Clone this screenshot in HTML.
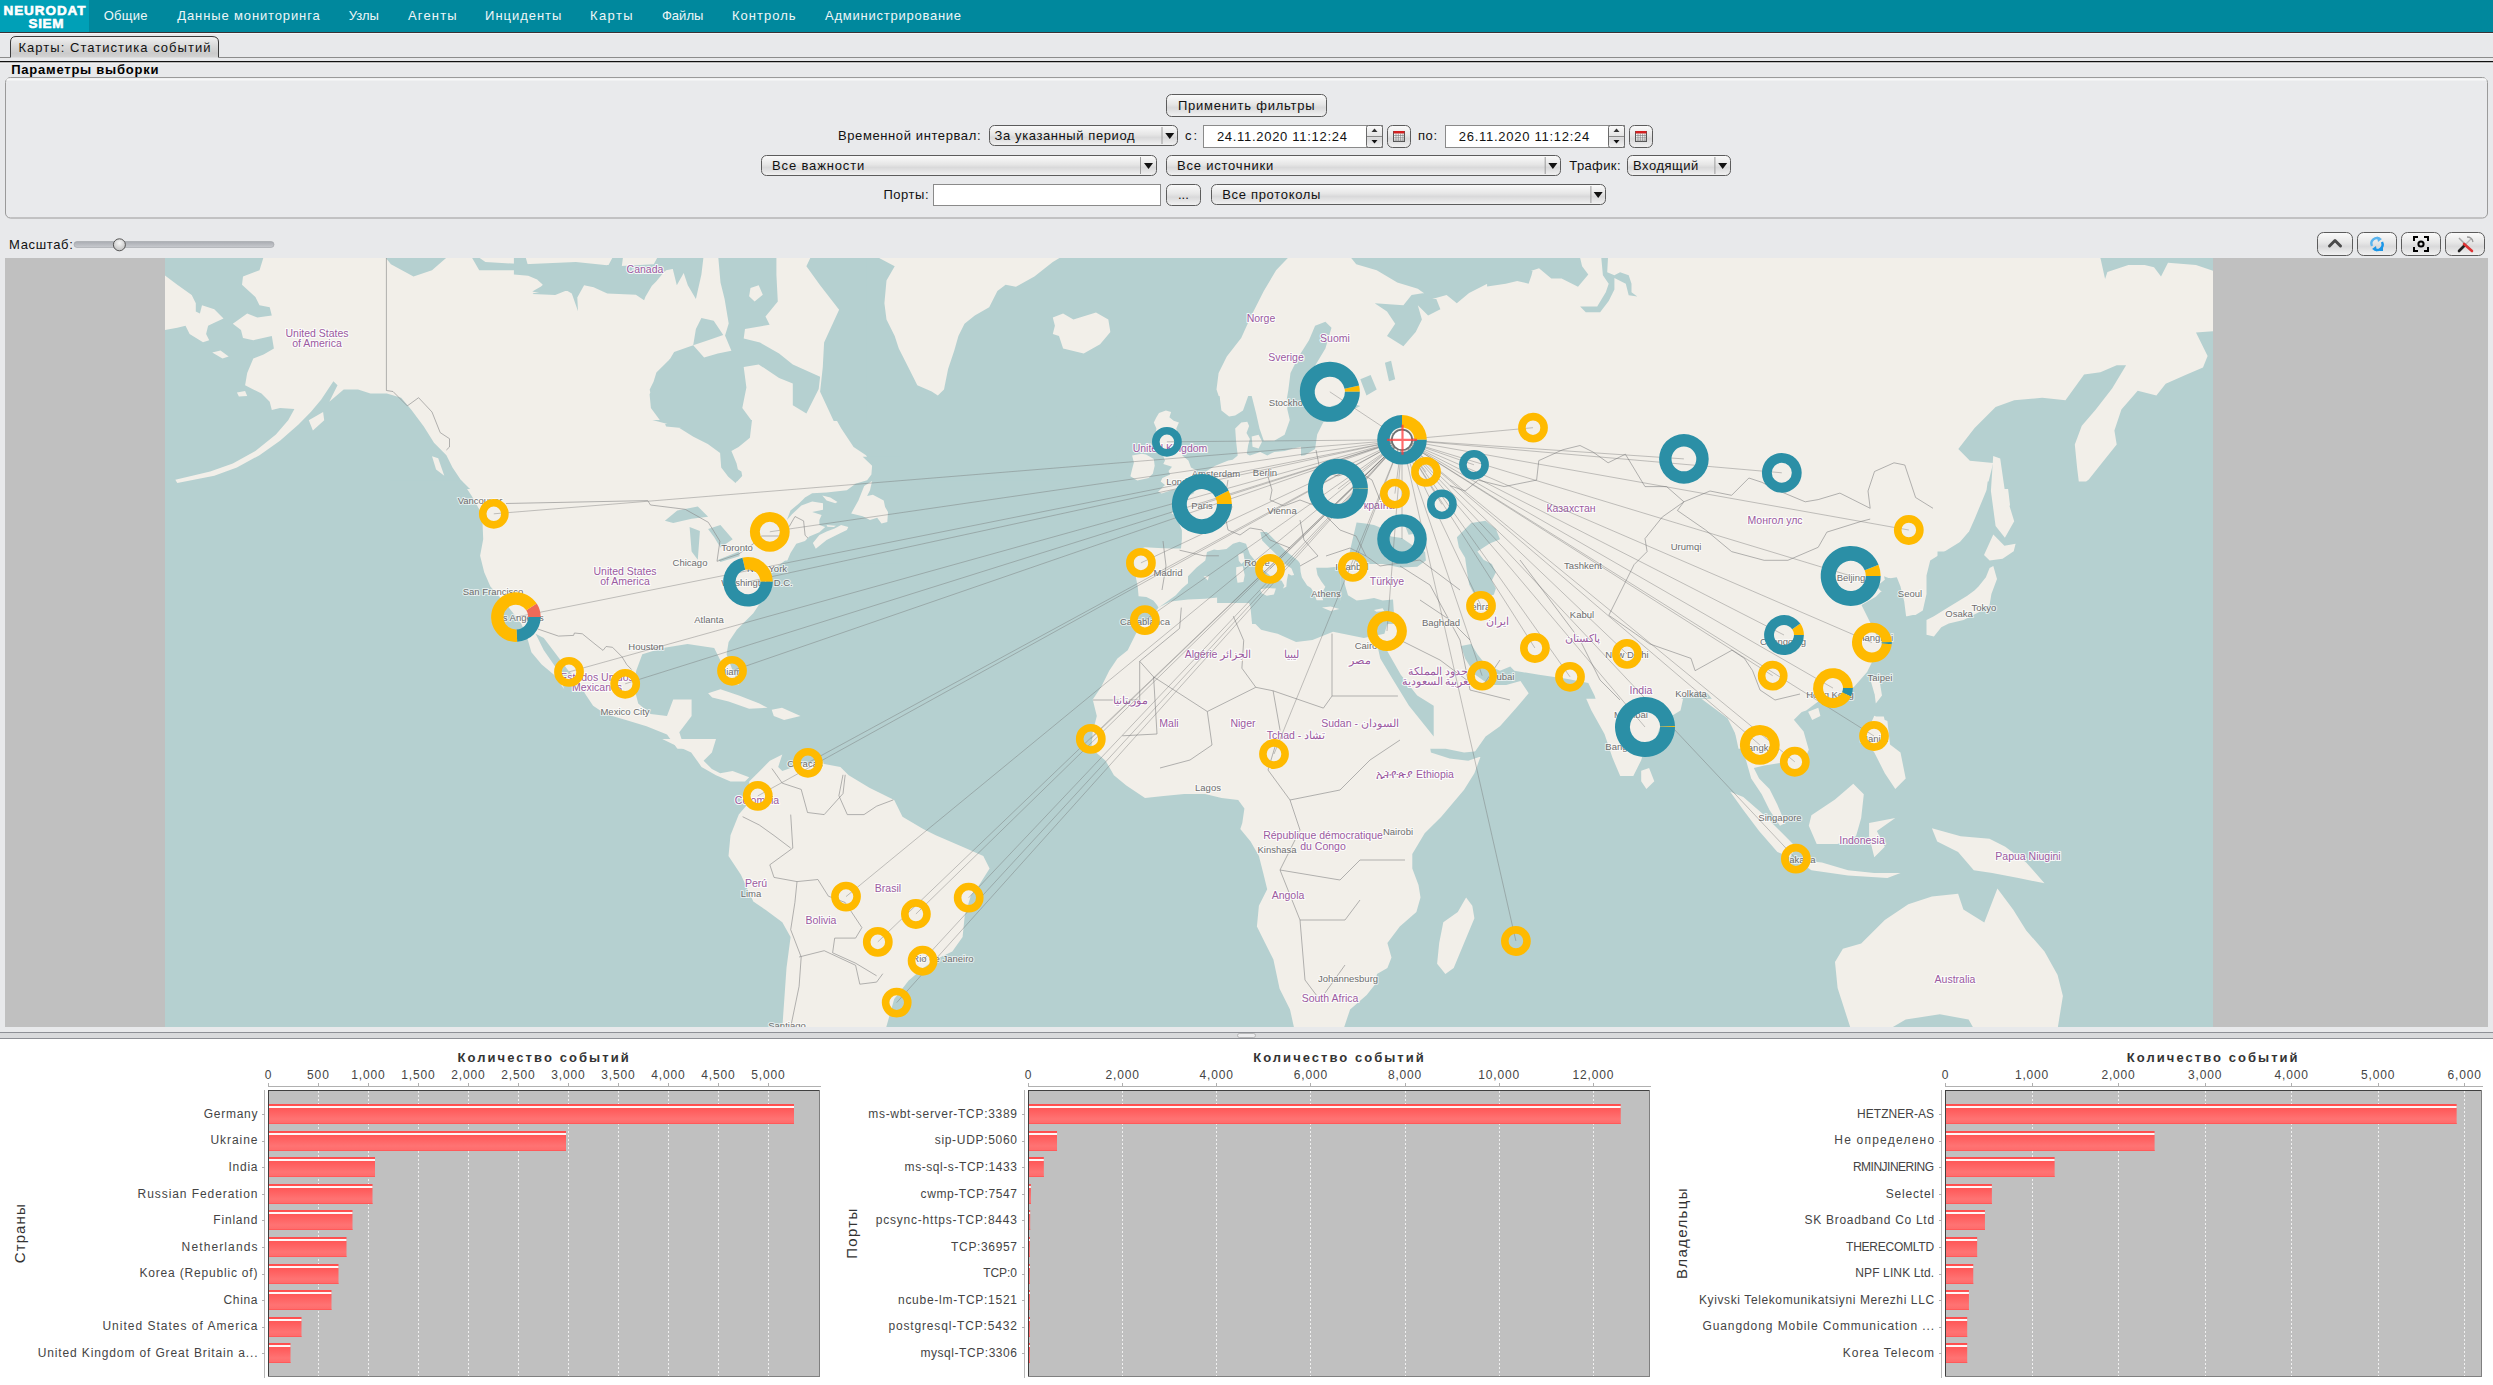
<!DOCTYPE html>
<html><head><meta charset="utf-8"><title>NeuroDAT SIEM</title>
<style>html,body{margin:0;padding:0;background:#e8e9eb;overflow:hidden}svg{display:block}text{font-family:"Liberation Sans",sans-serif}</style>
</head><body>
<svg xmlns="http://www.w3.org/2000/svg" width="2493" height="1385" viewBox="0 0 2493 1385" font-family="Liberation Sans, sans-serif"><defs>
<linearGradient id="gBtn" x1="0" y1="0" x2="0" y2="1">
 <stop offset="0" stop-color="#fbfbfb"/><stop offset="0.45" stop-color="#e6e6e6"/>
 <stop offset="0.6" stop-color="#d9d9da"/><stop offset="1" stop-color="#f2f2f2"/>
</linearGradient>
<linearGradient id="gTab" x1="0" y1="0" x2="0" y2="1">
 <stop offset="0" stop-color="#f2f2f2"/><stop offset="0.45" stop-color="#dadada"/><stop offset="0.8" stop-color="#cbcbcb"/><stop offset="1" stop-color="#d3d3d3"/>
</linearGradient>
<linearGradient id="gBar" x1="0" y1="0" x2="0" y2="1">
 <stop offset="0" stop-color="#ff4d4d"/><stop offset="0.75" stop-color="#ff7373"/><stop offset="1" stop-color="#ff6a6a"/>
</linearGradient>
<linearGradient id="gTrack" x1="0" y1="0" x2="0" y2="1">
 <stop offset="0" stop-color="#a9acb2"/><stop offset="1" stop-color="#c9cbcf"/>
</linearGradient>
<radialGradient id="gThumb" cx="0.5" cy="0.35" r="0.6">
 <stop offset="0" stop-color="#f6f6f6"/><stop offset="1" stop-color="#c4c4c4"/>
</radialGradient>
</defs><rect x="0" y="0" width="2493" height="1385" fill="#e8e9eb" />
<rect x="0" y="0" width="2493" height="32" fill="#00889d" />
<rect x="0" y="0" width="89" height="32" fill="#00a0b7" />
<rect x="0" y="32" width="2493" height="1" fill="#3b3335" />
<rect x="0" y="33" width="2493" height="1" fill="#f5f5f7" />
<text x="3.5" y="14.6" font-size="13.5" font-weight="bold" fill="#ffffff" textLength="82.0" lengthAdjust="spacing" text-anchor="start" stroke="#ffffff" stroke-width="0.6">NEURODAT</text>
<text x="28.5" y="28.4" font-size="13.5" font-weight="bold" fill="#ffffff" textLength="35.0" lengthAdjust="spacing" text-anchor="start" stroke="#ffffff" stroke-width="0.6">SIEM</text>
<text x="103.7" y="20.0" font-size="13" fill="#eef6f8" textLength="43.9" lengthAdjust="spacing" text-anchor="start" >Общие</text>
<text x="177.3" y="20.0" font-size="13" fill="#eef6f8" textLength="142.4" lengthAdjust="spacing" text-anchor="start" >Данные мониторинга</text>
<text x="348.7" y="20.0" font-size="13" fill="#eef6f8" textLength="30.1" lengthAdjust="spacing" text-anchor="start" >Узлы</text>
<text x="407.9" y="20.0" font-size="13" fill="#eef6f8" textLength="48.8" lengthAdjust="spacing" text-anchor="start" >Агенты</text>
<text x="485.1" y="20.0" font-size="13" fill="#eef6f8" textLength="76.3" lengthAdjust="spacing" text-anchor="start" >Инциденты</text>
<text x="590.0" y="20.0" font-size="13" fill="#eef6f8" textLength="42.6" lengthAdjust="spacing" text-anchor="start" >Карты</text>
<text x="661.9" y="20.0" font-size="13" fill="#eef6f8" textLength="41.5" lengthAdjust="spacing" text-anchor="start" >Файлы</text>
<text x="732.0" y="20.0" font-size="13" fill="#eef6f8" textLength="63.6" lengthAdjust="spacing" text-anchor="start" >Контроль</text>
<text x="825.1" y="20.0" font-size="13" fill="#eef6f8" textLength="136.0" lengthAdjust="spacing" text-anchor="start" >Администрирование</text>
<path d="M10.5,57.5 V42 Q10.5,36.5 16,36.5 H212 Q218.5,36.5 218.5,42 V57.5" fill="url(#gTab)" stroke="#3a3a3a" stroke-width="1"/>
<rect x="218" y="57" width="2275" height="1" fill="#8c8c8c" />
<rect x="0" y="57" width="10" height="1" fill="#8c8c8c" />
<rect x="0" y="61" width="2493" height="1.5" fill="#111111" />
<rect x="0" y="62.5" width="2493" height="1" fill="#f6f6f6" />
<text x="18.5" y="52.0" font-size="13" fill="#111" textLength="192.0" lengthAdjust="spacing" text-anchor="start" >Карты: Статистика событий</text>
<text x="11.2" y="73.8" font-size="13" font-weight="bold" fill="#000" textLength="147.3" lengthAdjust="spacing" text-anchor="start" >Параметры выборки</text>
<rect x="5.5" y="77.5" width="2482" height="140.5" rx="5" fill="#e9eaec" stroke="#9a9a9a" stroke-width="1"/>
<rect x="6.5" y="78.5" width="2480" height="2" fill="#f7f7f8"/>
<rect x="1166.5" y="94.5" width="160" height="22" rx="5" fill="url(#gBtn)" stroke="#5c5c5c" stroke-width="1"/>
<text x="1178.0" y="109.5" font-size="13" fill="#111" textLength="136.5" lengthAdjust="spacing" text-anchor="start" >Применить фильтры</text>
<text x="838.0" y="140.0" font-size="13" fill="#111" textLength="142.5" lengthAdjust="spacing" text-anchor="start" >Временной интервал:</text>
<rect x="989.5" y="125.5" width="188" height="20" rx="5" fill="url(#gBtn)" stroke="#5c5c5c" stroke-width="1"/>
<line x1="1162.0" y1="127" x2="1162.0" y2="144" stroke="#9c9c9c" stroke-width="1" />
<path d="M1165.25,133.0 L1174.25,133.0 L1169.75,139.0 Z" fill="#111"/>
<text x="994.6" y="140.0" font-size="13" fill="#111" textLength="140.0" lengthAdjust="spacing" text-anchor="start" >За указанный период</text>
<text x="1185.0" y="140.0" font-size="13" fill="#111" textLength="12.0" lengthAdjust="spacing" text-anchor="start" >с:</text>
<rect x="1203.5" y="125.5" width="179" height="22" fill="#ffffff" stroke="#8a8a8a" stroke-width="1"/>
<rect x="1366.5" y="125.5" width="16" height="22" rx="2" fill="url(#gBtn)" stroke="#6a6a6a"/>
<line x1="1367" y1="136.5" x2="1382" y2="136.5" stroke="#8a8a8a" stroke-width="1" />
<path d="M1371.5,132 L1377.5,132 L1374.5,128.5 Z" fill="#333"/>
<path d="M1371.5,140 L1377.5,140 L1374.5,143.5 Z" fill="#111"/>
<text x="1216.9" y="141.0" font-size="13" fill="#111" textLength="130.0" lengthAdjust="spacing" text-anchor="start" >24.11.2020 11:12:24</text>
<rect x="1387.5" y="125.5" width="23" height="22" rx="5" fill="url(#gBtn)" stroke="#5c5c5c" stroke-width="1"/>
<rect x="1393.5" y="131.5" width="11" height="10" fill="#f4f4f4" stroke="#555" stroke-width="1"/>
<rect x="1393.5" y="131" width="11" height="2.5" fill="#d42020"/>
<line x1="1393.5" y1="135.5" x2="1404.5" y2="135.5" stroke="#777" stroke-width="0.6" />
<line x1="1393.5" y1="137.8" x2="1404.5" y2="137.8" stroke="#777" stroke-width="0.6" />
<line x1="1393.5" y1="140.1" x2="1404.5" y2="140.1" stroke="#777" stroke-width="0.6" />
<line x1="1396.0" y1="133.5" x2="1396.0" y2="141.5" stroke="#777" stroke-width="0.6" />
<line x1="1398.3" y1="133.5" x2="1398.3" y2="141.5" stroke="#777" stroke-width="0.6" />
<line x1="1400.6" y1="133.5" x2="1400.6" y2="141.5" stroke="#777" stroke-width="0.6" />
<line x1="1402.9" y1="133.5" x2="1402.9" y2="141.5" stroke="#777" stroke-width="0.6" />
<text x="1417.9" y="140.0" font-size="13" fill="#111" textLength="19.1" lengthAdjust="spacing" text-anchor="start" >по:</text>
<rect x="1445.5" y="125.5" width="179" height="22" fill="#ffffff" stroke="#8a8a8a" stroke-width="1"/>
<rect x="1608.5" y="125.5" width="16" height="22" rx="2" fill="url(#gBtn)" stroke="#6a6a6a"/>
<line x1="1609" y1="136.5" x2="1624" y2="136.5" stroke="#8a8a8a" stroke-width="1" />
<path d="M1613.5,132 L1619.5,132 L1616.5,128.5 Z" fill="#333"/>
<path d="M1613.5,140 L1619.5,140 L1616.5,143.5 Z" fill="#111"/>
<text x="1458.8" y="141.0" font-size="13" fill="#111" textLength="130.4" lengthAdjust="spacing" text-anchor="start" >26.11.2020 11:12:24</text>
<rect x="1629.5" y="125.5" width="23" height="22" rx="5" fill="url(#gBtn)" stroke="#5c5c5c" stroke-width="1"/>
<rect x="1635.5" y="131.5" width="11" height="10" fill="#f4f4f4" stroke="#555" stroke-width="1"/>
<rect x="1635.5" y="131" width="11" height="2.5" fill="#d42020"/>
<line x1="1635.5" y1="135.5" x2="1646.5" y2="135.5" stroke="#777" stroke-width="0.6" />
<line x1="1635.5" y1="137.8" x2="1646.5" y2="137.8" stroke="#777" stroke-width="0.6" />
<line x1="1635.5" y1="140.1" x2="1646.5" y2="140.1" stroke="#777" stroke-width="0.6" />
<line x1="1638.0" y1="133.5" x2="1638.0" y2="141.5" stroke="#777" stroke-width="0.6" />
<line x1="1640.3" y1="133.5" x2="1640.3" y2="141.5" stroke="#777" stroke-width="0.6" />
<line x1="1642.6" y1="133.5" x2="1642.6" y2="141.5" stroke="#777" stroke-width="0.6" />
<line x1="1644.9" y1="133.5" x2="1644.9" y2="141.5" stroke="#777" stroke-width="0.6" />
<rect x="761.5" y="155.5" width="395" height="20" rx="5" fill="url(#gBtn)" stroke="#5c5c5c" stroke-width="1"/>
<line x1="1140.5" y1="157" x2="1140.5" y2="174" stroke="#9c9c9c" stroke-width="1" />
<path d="M1144.0,163.0 L1153.0,163.0 L1148.5,169.0 Z" fill="#111"/>
<text x="772.0" y="170.2" font-size="13" fill="#111" textLength="92.3" lengthAdjust="spacing" text-anchor="start" >Все важности</text>
<rect x="1166.5" y="155.5" width="394" height="20" rx="5" fill="url(#gBtn)" stroke="#5c5c5c" stroke-width="1"/>
<line x1="1545.2" y1="157" x2="1545.2" y2="174" stroke="#9c9c9c" stroke-width="1" />
<path d="M1548.35,163.0 L1557.35,163.0 L1552.85,169.0 Z" fill="#111"/>
<text x="1177.0" y="170.2" font-size="13" fill="#111" textLength="96.2" lengthAdjust="spacing" text-anchor="start" >Все источники</text>
<text x="1569.3" y="170.2" font-size="13" fill="#111" textLength="51.2" lengthAdjust="spacing" text-anchor="start" >Трафик:</text>
<rect x="1627.5" y="155.5" width="103" height="20" rx="5" fill="url(#gBtn)" stroke="#5c5c5c" stroke-width="1"/>
<line x1="1714.9" y1="157" x2="1714.9" y2="174" stroke="#9c9c9c" stroke-width="1" />
<path d="M1718.2,163.0 L1727.2,163.0 L1722.7,169.0 Z" fill="#111"/>
<text x="1633.0" y="170.2" font-size="13" fill="#111" textLength="65.3" lengthAdjust="spacing" text-anchor="start" >Входящий</text>
<text x="883.4" y="199.1" font-size="13" fill="#111" textLength="45.1" lengthAdjust="spacing" text-anchor="start" >Порты:</text>
<rect x="933.5" y="184.5" width="227" height="21" fill="#ffffff" stroke="#8a8a8a" stroke-width="1"/>
<rect x="1166.5" y="184.5" width="34" height="21" rx="5" fill="url(#gBtn)" stroke="#5c5c5c" stroke-width="1"/>
<text x="1178.0" y="199.0" font-size="13" fill="#111" text-anchor="start" >...</text>
<rect x="1211.5" y="184.5" width="394" height="20" rx="5" fill="url(#gBtn)" stroke="#5c5c5c" stroke-width="1"/>
<line x1="1590.9" y1="186" x2="1590.9" y2="203" stroke="#9c9c9c" stroke-width="1" />
<path d="M1593.7,192.0 L1602.7,192.0 L1598.2,198.0 Z" fill="#111"/>
<text x="1222.2" y="198.6" font-size="13" fill="#111" textLength="98.2" lengthAdjust="spacing" text-anchor="start" >Все протоколы</text>
<text x="9.0" y="248.7" font-size="13" fill="#111" textLength="63.8" lengthAdjust="spacing" text-anchor="start" >Масштаб:</text>
<rect x="74" y="241.5" width="200" height="6" rx="3" fill="url(#gTrack)" stroke="#a0a3a8" stroke-width="0.6"/>
<circle cx="119.4" cy="244.8" r="6" fill="url(#gThumb)" stroke="#555" stroke-width="1"/>
<rect x="2317.5" y="232.5" width="35" height="23" rx="6" fill="url(#gBtn)" stroke="#5c5c5c" stroke-width="1"/>
<rect x="2357.5" y="232.5" width="39" height="23" rx="6" fill="url(#gBtn)" stroke="#5c5c5c" stroke-width="1"/>
<rect x="2401.5" y="232.5" width="39" height="23" rx="6" fill="url(#gBtn)" stroke="#5c5c5c" stroke-width="1"/>
<rect x="2445.5" y="232.5" width="39" height="23" rx="6" fill="url(#gBtn)" stroke="#5c5c5c" stroke-width="1"/>
<path d="M2329.5,246 L2335,240.5 L2340.5,246" fill="none" stroke="#4a4a4a" stroke-width="3" stroke-linecap="round" stroke-linejoin="round"/>
<g transform="translate(2377,244)"><path d="M-5,2 A5.5,5.5 0 0 1 3,-5" fill="none" stroke="#5ab4ee" stroke-width="2.4"/><path d="M5,-2 A5.5,5.5 0 0 1 -3,5" fill="none" stroke="#1a96e8" stroke-width="2.4"/><path d="M0,-7.5 L5,-5 L1,-2 Z" fill="#5ab4ee"/><path d="M0,7.5 L-5,5 L-1,2 Z M2,7 L6,7 L6,3 Z" fill="#1a96e8"/></g>
<g transform="translate(2421,244)" fill="none" stroke="#000" stroke-width="2"><path d="M-7,-3 V-7 H-3 M3,-7 H7 V-3 M7,3 V7 H3 M-3,7 H-7 V3"/><circle cx="0" cy="0" r="2.6"/></g>
<g transform="translate(2465,244)"><line x1="-6" y1="-6" x2="6" y2="6" stroke="#aaa" stroke-width="1.5"/><line x1="-6" y1="7" x2="0" y2="1" stroke="#222" stroke-width="2.6" stroke-linecap="round"/><line x1="0" y1="1" x2="6" y2="-5" stroke="#bbb" stroke-width="1.2"/><line x1="-1" y1="0" x2="7" y2="7" stroke="#d33" stroke-width="2.6" stroke-linecap="round"/><path d="M2,-7 Q7,-7 8,-2" fill="none" stroke="#999" stroke-width="1.3"/></g>
<rect x="5" y="258" width="2483" height="769" fill="#c0c0c0" />
<svg x="165" y="258" width="2048" height="769" viewBox="0 0 2048 769" overflow="hidden">
<rect x="0" y="0" width="2048" height="769" fill="#b5d0d0" />
<path fill="#f2efe9" d="M0.0,17.5L12.3,26.7L26.7,37.0L30.8,45.2L30.8,53.4L34.9,55.5L37.0,47.2L49.3,51.3L58.5,60.6L47.2,65.7L43.1,67.8L41.1,76.0L44.2,82.2L38.0,84.2L24.6,76.0L20.5,67.8L12.3,69.8L0.0,71.9ZM513.5,-1.0L513.5,258.8L322.4,258.8L316.3,240.3L304.0,230.0L295.7,221.8L287.5,209.5L281.4,197.2L269.0,184.8L258.8,168.4L246.5,152.0L236.2,139.7L221.8,135.6L205.4,135.6L193.1,131.4L178.7,131.4L164.3,143.8L172.5,127.3L168.4,123.2L156.1,141.7L145.8,154.0L133.5,166.4L115.0,182.8L94.5,197.2L71.9,209.5L49.3,217.7L12.3,224.9L10.3,221.8L45.2,213.6L67.8,205.4L90.4,193.1L110.9,176.6L123.2,162.3L129.4,151.0L115.0,149.9L106.8,152.0L104.7,143.8L96.5,135.6L88.3,131.4L80.1,127.3L82.2,115.0L88.3,100.6L98.6,96.5L108.9,90.4L106.8,78.0L88.3,82.2L78.0,80.1L76.0,71.9L67.8,65.7L82.2,55.5L92.4,59.6L106.8,57.5L104.7,49.3L94.5,47.2L90.4,39.0L77.0,26.7L78.0,18.5L94.5,12.3L98.6,-1.0ZM47.2,94.5L55.5,92.4L63.7,98.6L57.5,100.6ZM71.9,134.5L80.1,133.1L82.2,138.0L73.9,138.6ZM143.8,162.3L158.1,154.0L159.2,162.3L147.9,172.5ZM267.0,198.2L273.2,200.2L279.3,217.7L271.1,211.5ZM354.3,-0.7L695.0,-0.7L695.0,163.0L354.3,163.0ZM511.0,143.8L635.2,143.8L655.8,133.5L668.1,156.1L676.3,170.5L688.6,189.0L701.0,197.2L707.1,207.4L705.1,217.7L692.7,228.0L676.3,236.2L655.8,238.2L639.3,244.4L627.0,258.0L511.0,258.0ZM688.6,232.1L696.8,223.9L707.1,230.0L713.3,242.3L721.5,258.0L690.7,258.0ZM896.1,-1.0L887.8,4.1L869.4,18.5L850.9,28.8L840.6,26.7L832.4,32.9L824.2,49.3L809.8,57.5L799.5,65.7L793.4,78.0L789.3,92.4L783.1,110.9L779.0,131.4L772.8,137.6L766.7,133.5L752.3,127.3L748.2,119.1L740.0,102.7L733.8,90.4L729.7,78.0L721.5,61.6L719.4,45.2L721.5,22.6L729.7,8.2L712.2,-1.0ZM887.8,59.6L898.1,55.5L908.4,61.6L931.0,54.4L943.3,61.6L945.4,73.9L935.1,86.3L918.7,95.5L898.1,90.4L894.0,78.0L887.8,76.0L889.9,67.8ZM967.9,199.2L982.3,195.1L992.6,197.2L994.6,207.4L992.6,217.7L976.2,222.8L965.9,217.7L970.0,207.4ZM954.0,-1.0L1468.5,-1.0L1468.5,258.0L954.0,258.0ZM1465.8,-1.2L2049.6,-1.2L2049.6,293.6L1465.8,293.6ZM234.0,231.0L748.5,231.0L748.5,490.8L234.0,490.8ZM870.2,231.0L1260.5,231.0L1260.5,490.8L870.2,490.8ZM1258.0,231.0L1772.5,231.0L1772.5,490.8L1258.0,490.8ZM907.4,481.0L1263.8,481.0L1265.9,494.4L1284.6,500.6L1303.2,502.7L1315.6,498.6L1309.4,515.2L1299.1,531.7L1276.3,558.7L1259.7,575.2L1247.3,596.0L1247.3,610.5L1253.5,627.0L1255.5,639.5L1251.4,654.0L1234.8,668.5L1222.4,685.1L1226.5,699.6L1222.4,709.9L1212.0,716.1L1210.0,726.5L1201.7,736.9L1185.1,751.4L1178.9,770.0L1129.1,770.0L1125.0,751.4L1114.6,730.7L1108.4,701.6L1100.1,685.1L1091.9,668.5L1093.9,647.8L1102.2,631.2L1098.1,614.6L1093.9,598.0L1085.6,583.5L1075.3,571.1L1077.3,564.9L1079.4,550.4L1073.2,542.1L1056.6,540.0L1040.0,535.9L1019.3,535.9L998.6,537.9L980.0,540.0L961.3,527.6L948.9,517.2L940.6,502.7L926.1,490.3ZM1268.0,481.0L1330.1,481.0L1319.8,492.4L1299.1,494.4L1278.3,490.3ZM1301.1,639.5L1307.3,647.8L1309.4,660.2L1299.1,685.1L1288.7,709.9L1280.4,716.1L1272.1,705.8L1274.2,685.1L1278.3,664.3L1292.8,654.0Z"/>
<path fill="#b5d0d0" d="M291.6,-9.2L267.0,12.3L248.5,18.5L225.9,6.2L213.6,-9.2ZM320.4,4.1L359.4,6.2L410.8,4.1L451.8,8.2L488.8,6.2L497.0,-9.2L521.7,-9.2L521.7,8.2L501.1,12.3L488.8,24.6L478.5,42.1L472.4,26.7L462.1,35.9L443.6,30.8L431.3,20.5L416.9,12.3L410.8,28.8L390.2,37.0L367.6,35.9L377.9,26.7L367.6,17.5L349.1,12.3L314.2,12.3L301.9,-9.2ZM521.7,170.5L501.1,168.4L497.0,158.1L486.8,143.8L484.7,131.4L492.9,115.0L505.2,100.6L521.7,92.4ZM348.9,-6.1L359.1,-6.1L363.2,8.2L376.8,13.6L379.5,20.5L395.9,19.1L413.6,12.3L419.1,8.2L431.4,16.4L443.7,6.8L450.5,-6.1L458.7,-6.1L455.9,15.0L466.8,23.2L477.7,23.2L488.7,20.5L492.8,13.6L498.2,4.1L502.3,-6.1L506.4,-6.1L503.7,8.2L491.4,23.2L483.2,31.4L479.1,42.3L470.9,36.8L442.3,35.5L428.6,29.3L419.1,27.3L412.3,39.6L413.0,53.2L406.8,35.5L400.0,31.4L382.3,36.8L367.3,33.4L378.2,27.3L372.7,21.8L363.2,17.7L348.9,16.4ZM499.6,-6.1L539.1,-6.1L536.4,16.4L530.9,40.9L522.8,27.3L518.7,15.0L511.8,27.3L507.8,10.9ZM495.5,163.0L485.9,150.0L484.6,136.4L491.4,114.6L505.0,100.9L509.1,94.1L528.2,87.3L530.9,70.9L536.4,60.0L548.7,62.7L559.6,79.1L563.7,65.5L559.6,40.9L555.5,24.5L552.8,-6.1L611.4,-6.1L611.4,16.4L612.8,43.6L600.5,58.6L604.6,66.8L580.0,70.9L578.7,80.5L595.0,84.6L614.1,95.5L627.8,106.4L655.1,118.7L653.7,130.9L641.4,155.5L627.8,147.3L627.8,125.5L614.1,120.0L593.7,106.4L578.7,109.1L581.4,129.6L577.3,150.0L586.9,163.0ZM648.2,-6.1L701.4,-6.1L701.4,163.0L668.7,163.0L655.1,133.7L657.8,109.1L659.1,84.6L674.1,51.8L655.1,27.3L641.4,8.2ZM587.0,162.0L584.9,179.7L573.6,189.0L566.4,193.1L571.6,205.4L574.6,219.8L570.5,224.9L563.3,218.7L556.2,209.5L555.1,195.1L542.8,185.9L528.4,178.7L512.0,168.4L487.4,162.0ZM627.0,266.2L639.3,244.4L655.8,238.2L676.3,236.2L686.6,230.0L690.7,238.2L686.6,266.2ZM945.8,-9.2L1131.6,-9.2L1111.1,12.3L1098.8,32.9L1086.4,57.5L1076.2,80.1L1061.8,98.6L1053.6,115.0L1051.5,131.4L1057.7,149.9L1068.0,158.1L1080.3,152.0L1086.4,143.8L1090.6,152.0L1088.5,164.3L1080.3,170.5L1072.1,172.5L1070.0,184.8L1072.1,197.2L1065.9,203.3L1051.5,207.4L1041.3,213.6L1037.2,225.9L1035.1,236.2L1022.8,242.3L1006.3,246.5L996.1,266.2L945.8,266.2ZM1082.3,189.0L1088.5,180.7L1098.8,180.7L1104.9,172.5L1111.1,164.3L1119.3,156.1L1123.4,131.4L1125.5,115.0L1133.7,98.6L1144.0,82.2L1150.1,67.8L1160.4,63.7L1166.5,69.8L1160.4,90.4L1148.1,110.9L1144.0,127.3L1146.0,143.8L1160.4,149.9L1180.9,143.8L1195.3,147.9L1178.9,156.1L1158.3,164.3L1152.2,176.6L1150.1,191.0L1139.8,197.2L1111.1,201.3L1078.2,197.2ZM1238.4,47.2L1246.6,37.0L1259.0,34.9L1271.3,41.1L1275.4,51.3L1263.1,57.5L1252.8,47.2L1256.9,61.6L1250.7,73.9L1238.4,88.3L1222.0,78.0L1230.2,65.7L1222.0,53.4L1209.7,45.2ZM1178.9,-9.2L1413.0,-9.2L1417.1,8.2L1423.3,16.4L1413.0,28.8L1396.6,20.5L1386.3,20.5L1374.0,10.3L1355.5,16.4L1324.7,24.6L1304.1,34.9L1291.8,45.2L1281.6,37.0L1267.2,41.1L1252.8,30.8L1232.3,24.6L1211.7,12.3L1191.2,6.2ZM1195.3,121.2L1205.6,117.1L1211.7,131.4L1201.5,137.6ZM1219.9,104.7L1226.1,102.7L1230.2,121.2L1224.0,123.2ZM1933.1,-10.5L2058.9,-10.5L2058.9,16.3L2031.0,7.0L2003.0,4.7L1996.0,18.6L1989.0,9.3L1979.7,7.0L1963.4,7.0L1942.4,14.0L1940.1,21.0ZM1793.3,191.1L1809.6,170.1L1830.6,149.1L1849.2,142.2L1877.2,139.8L1900.5,142.2L1919.1,116.5L1935.4,114.2L1951.7,107.2L1961.1,107.2L1947.1,130.5L1930.8,151.5L1916.8,167.8L1909.8,186.4L1912.1,209.7L1914.4,228.4L1923.8,221.4L1933.1,209.7L1951.7,186.4L1949.4,172.5L1956.4,151.5L1972.7,132.8L1991.4,137.5L2000.7,125.8L2021.6,116.5L2038.0,109.5L2042.6,97.9L2031.0,74.6L2058.9,72.2L2058.9,303.0L1790.9,303.0L1809.6,261.0L1821.2,233.0L1828.2,205.1L1804.9,202.7ZM225.8,222.8L296.6,222.8L306.9,238.2L317.2,256.6L318.2,281.3L315.1,297.7L319.2,314.2L325.4,328.5L341.8,347.0L356.2,365.5L362.3,379.9L366.4,394.3L376.7,406.6L389.0,416.8L399.3,431.2L393.1,412.7L378.8,392.2L370.6,375.8L378.8,379.9L391.1,396.3L403.4,412.7L413.7,423.0L419.8,435.3L428.1,447.7L440.4,455.9L460.9,462.0L481.5,468.2L502.0,476.4L518.4,499.0L225.8,499.0ZM756.7,499.0L522.5,499.0L514.3,474.3L526.6,457.9L526.6,441.5L508.2,441.5L502.0,457.9L485.6,455.9L473.2,445.6L469.1,429.2L471.2,412.7L477.3,396.3L497.9,390.1L522.5,386.0L549.2,390.1L557.4,406.6L565.7,425.1L573.9,427.1L567.7,412.7L561.6,396.3L563.6,384.0L571.8,371.7L588.3,355.2L596.5,342.9L606.7,330.6L604.7,314.2L621.1,301.8L625.2,293.6L635.5,285.4L651.9,289.5L676.6,262.8L686.8,256.6L705.3,244.3L707.4,222.8L756.7,222.8ZM637.5,222.8L707.4,222.8L686.8,244.3L676.6,256.6L656.0,262.8L635.5,256.6L631.4,244.3ZM737.8,222.8L1003.7,222.8L997.6,244.3L999.6,254.6L1014.0,262.8L1016.0,279.2L1009.9,287.5L993.5,289.5L977.0,291.6L970.9,299.8L972.9,314.2L972.9,328.5L975.0,338.8L983.2,347.0L991.4,351.1L989.3,355.2L977.0,365.5L970.9,375.8L962.7,392.2L952.4,400.4L944.2,412.7L936.0,429.2L927.7,441.5L931.8,457.9L927.7,474.3L925.7,499.0L737.8,499.0ZM991.4,349.1L1005.8,338.8L1022.2,328.5L1034.5,303.9L1046.9,291.6L1067.4,285.4L1083.8,285.4L1096.1,291.6L1108.5,301.8L1122.8,314.2L1129.0,322.4L1127.0,330.6L1133.1,322.4L1137.2,314.2L1143.4,310.0L1133.1,297.7L1116.7,285.4L1102.3,275.1L1100.3,273.1L1112.6,281.3L1129.0,293.6L1141.3,305.9L1141.3,314.2L1145.4,328.5L1151.6,342.9L1157.8,340.9L1166.0,324.4L1161.9,314.2L1174.2,308.0L1182.4,314.2L1186.5,328.5L1188.6,338.8L1209.1,342.9L1227.6,342.9L1225.5,355.2L1219.4,375.8L1198.8,379.9L1168.0,373.7L1147.5,381.9L1131.1,384.0L1112.6,375.8L1096.1,371.7L1083.8,359.3L1083.8,342.9L1071.5,345.0L1044.8,345.0L1014.0,349.1L993.5,355.2ZM1184.5,293.6L1190.6,273.1L1209.1,264.9L1229.6,273.1L1244.0,283.3L1268.7,289.5L1268.7,310.0L1239.9,305.9L1219.4,301.8L1198.8,297.7ZM1211.2,381.9L1219.4,388.1L1235.8,416.8L1252.2,437.4L1268.7,447.7L1268.7,478.5L1244.0,447.7L1227.6,421.0L1215.3,400.4ZM1291.9,279.2L1306.2,264.9L1320.6,262.8L1330.9,271.0L1335.0,281.3L1324.7,285.4L1312.4,293.6L1318.6,301.8L1326.8,305.9L1330.9,314.2L1326.8,322.4L1330.9,330.6L1328.8,336.7L1318.6,338.8L1308.3,334.7L1304.2,326.5L1302.1,314.2L1300.1,299.8L1293.9,289.5ZM1306.2,499.0L1320.6,478.5L1335.0,468.2L1351.4,449.7L1363.7,435.3L1355.5,423.0L1341.2,427.1L1324.7,427.1L1310.3,416.8L1300.1,400.4L1296.0,388.1L1306.2,386.0L1312.4,396.3L1320.6,406.6L1335.0,412.7L1345.3,408.6L1349.4,412.7L1374.0,416.8L1402.8,421.0L1423.3,425.1L1429.5,437.4L1433.6,449.7L1439.7,457.9L1443.8,474.3L1452.1,499.0ZM1484.9,499.0L1495.2,468.2L1505.5,449.7L1517.8,439.4L1526.0,435.3L1542.4,435.3L1550.6,445.6L1560.9,455.9L1569.1,470.2L1575.3,499.0ZM1626.6,499.0L1628.7,462.0L1636.9,453.8L1645.1,441.5L1659.5,443.5L1669.8,437.4L1690.3,429.2L1706.7,412.7L1714.9,396.3L1717.0,386.0L1710.8,375.8L1702.6,359.3L1696.5,347.0L1710.8,338.8L1721.1,328.5L1719.1,318.3L1729.3,322.4L1731.4,334.7L1735.5,347.0L1737.5,359.3L1756.0,355.2L1761.6,353.2L1761.6,326.5L1765.3,312.1L1780.7,301.8L1780.7,499.0ZM1656.6,451.0L1689.1,428.7L1702.1,413.9L1709.5,399.0L1720.7,386.0L1713.2,361.9L1702.1,352.6L1707.7,343.3L1718.8,335.9L1711.4,328.5L1720.7,321.1L1731.8,319.2L1735.5,328.5L1739.2,343.3L1741.1,358.2L1748.5,358.2L1757.8,352.6L1761.5,335.9L1761.5,317.4L1765.2,302.5L1780.0,293.2L1794.9,284.0L1807.9,269.1L1819.0,250.6L1822.7,223.6L2049.1,223.6L2049.1,497.4L1656.6,497.4ZM1322.1,-12.9L1403.6,-12.9L1406.5,8.6L1412.2,17.2L1417.9,20.0L1412.2,28.6L1400.8,20.0L1392.2,14.3L1369.3,5.7L1366.5,17.2L1363.6,25.7L1352.2,22.9L1340.7,25.7L1322.1,28.6ZM1435.1,-12.9L1443.7,-12.9L1442.2,14.3L1449.4,17.2L1455.1,14.3L1463.7,17.2L1466.5,25.7L1466.5,34.3L1472.3,38.6L1463.7,37.2L1460.8,25.7L1449.4,20.0L1449.4,31.5L1443.7,42.9L1435.1,54.3L1420.8,54.3L1415.1,48.6L1432.2,48.6L1440.8,34.3L1443.7,25.7L1437.9,17.2Z"/>
<path fill="#f2efe9" d="M528.2,87.3L544.6,81.8L559.6,76.4L566.4,92.7L552.8,95.5L539.1,99.6ZM585.5,30.0L593.7,27.3L597.8,36.8L589.6,43.6L584.1,38.2ZM992.0,162.3L1004.3,152.0L1012.5,162.3L1006.3,174.6L1016.6,189.0L1022.8,205.4L1028.9,221.8L1033.0,231.1L1016.6,236.2L996.1,234.1L998.1,223.9L1004.3,215.7L996.1,203.3L998.1,193.1L985.8,180.7L981.7,164.3ZM965.3,217.7L971.4,203.3L981.7,197.2L989.9,200.2L996.1,205.4L995.0,217.7L985.8,225.9L967.3,223.9ZM1828.2,198.1L1835.2,200.4L1839.9,233.0L1849.2,263.3L1839.9,279.7L1830.6,268.0L1825.9,233.0ZM686.8,236.1L699.2,232.0L711.5,240.2L723.8,254.6L719.7,264.9L705.3,262.8L690.9,252.5ZM543.1,435.3L555.4,431.2L573.9,437.4L594.4,445.6L602.6,449.7L584.1,450.7L563.6,443.5L547.2,439.4ZM606.7,451.8L617.0,449.7L635.5,457.9L619.1,462.0L608.8,457.9ZM1073.6,312.1L1081.8,310.0L1083.8,322.4L1075.6,324.4ZM1077.7,293.6L1083.8,293.6L1083.8,305.9L1079.7,305.9ZM1100.3,332.6L1116.7,328.5L1120.8,336.7L1106.4,338.8ZM1157.8,349.1L1174.2,349.1L1172.1,353.2L1157.8,352.1ZM1205.0,351.1L1217.3,349.1L1215.3,355.2ZM1643.1,453.8L1653.3,449.7L1655.4,457.9L1647.2,462.0ZM1708.8,429.2L1714.9,425.1L1717.0,437.4L1710.8,445.6ZM1761.5,361.9L1768.9,358.2L1783.8,348.9L1802.3,337.8L1809.7,332.2L1813.5,328.5L1820.9,319.2L1824.6,309.9L1828.3,308.1L1832.0,321.1L1826.4,335.9L1824.6,347.0L1817.2,352.6L1798.6,361.9L1783.8,365.6L1776.3,369.3L1768.9,378.6L1761.5,376.7ZM1819.0,296.9L1828.3,276.5L1839.4,287.7L1850.6,285.8L1848.7,293.2L1837.6,300.7L1824.6,302.5ZM1832.0,231.1L1843.1,231.1L1845.0,246.8L1839.4,267.3L1832.0,269.1L1828.3,250.6ZM1705.8,423.1L1713.2,419.4L1715.1,428.7L1709.5,436.1ZM1709.5,458.4L1718.8,458.4L1722.5,473.2L1724.4,489.9L1705.8,489.9ZM497.2,481.0L551.0,481.0L546.9,494.4L538.6,502.7L546.9,511.0L555.2,515.2L567.6,513.1L584.2,519.3L580.0,523.4L565.5,523.4L551.0,517.2L536.5,508.9L526.2,494.4L507.5,486.1ZM584.2,523.4L592.5,515.2L604.9,502.7L617.3,496.5L613.2,508.9L617.3,513.1L633.9,506.9L652.6,504.8L675.4,508.9L683.7,517.2L704.4,529.7L729.2,542.1L737.5,558.7L758.2,571.1L770.7,577.3L799.7,589.7L818.3,598.0L824.6,610.5L814.2,627.0L805.9,637.4L799.7,658.1L797.6,678.9L787.3,693.4L770.7,701.6L758.2,709.9L743.7,722.4L729.2,741.0L721.0,770.0L617.3,770.0L621.5,709.9L625.6,678.9L617.3,664.3L600.8,651.9L588.3,643.6L575.9,616.7L563.5,598.0L565.5,577.3L573.8,556.6L584.2,544.2ZM1421.2,440.7L1518.1,440.7L1515.5,452.5L1494.5,465.6L1481.4,483.9L1476.2,502.2L1468.3,518.0L1455.2,518.0L1447.4,499.6L1439.5,476.0L1426.4,452.5ZM1476.2,512.7L1484.1,510.1L1489.3,523.2L1481.4,531.1L1476.2,523.2ZM1536.4,440.7L1656.9,440.7L1641.2,452.5L1625.5,457.7L1638.6,473.4L1643.8,491.8L1636.0,510.1L1622.9,515.3L1615.0,504.9L1599.3,507.5L1588.8,510.1L1594.1,520.6L1604.5,531.1L1612.4,546.8L1620.2,565.1L1615.0,567.7L1604.5,552.0L1596.7,536.3L1586.2,520.6L1581.0,502.2L1573.1,481.3L1562.6,460.3ZM1565.2,533.7L1578.3,538.9L1599.3,557.2L1617.6,575.6L1630.7,588.7L1625.5,599.2L1612.4,593.9L1594.1,573.0L1578.3,552.0ZM1630.7,601.8L1656.9,604.4L1683.1,612.2L1709.3,614.9L1735.5,614.9L1722.4,620.1L1683.1,617.5L1646.4,612.2ZM1646.4,557.2L1670.0,541.5L1688.3,525.8L1698.8,536.3L1696.2,559.9L1691.0,578.2L1672.6,586.1L1651.7,586.1L1643.8,567.7ZM1704.1,565.1L1730.3,559.9L1711.9,573.0L1719.8,588.7L1709.3,599.2L1704.1,578.2ZM1709.3,457.7L1722.4,463.0L1725.0,486.5L1735.5,494.4L1740.7,520.6L1730.3,531.1L1719.8,515.3L1709.3,494.4L1698.8,481.3ZM1766.9,570.3L1795.7,578.2L1824.5,580.8L1840.3,588.7L1861.2,604.4L1879.5,625.3L1853.4,620.1L1827.2,614.9L1808.8,612.2L1793.1,593.9L1772.2,583.4ZM1719.8,662.0L1743.3,646.3L1766.9,638.4L1793.1,635.8L1798.4,651.5L1819.3,664.6L1832.4,630.6L1848.1,651.5L1861.2,672.5L1879.5,693.4L1892.6,717.0L1897.9,738.0L1892.6,770.7L1808.8,770.7L1803.6,761.5L1774.8,756.3L1740.7,761.5L1725.0,770.7L1685.7,770.7L1672.6,730.1L1670.0,703.9L1677.9,690.8L1696.2,685.6Z"/>
<path fill="#b5d0d0" d="M499.9,262.8L512.3,252.5L532.8,248.4L543.1,258.7L526.6,260.8L508.2,264.9ZM524.6,269.0L534.9,273.1L532.8,301.8L526.6,293.6ZM543.1,271.0L555.4,266.9L567.7,281.3L555.4,289.5L549.2,279.2ZM553.3,301.8L573.9,293.6L575.9,297.7L555.4,303.9ZM571.8,291.6L586.2,287.5L588.3,291.6L573.9,293.6Z"/>
<path fill="#f2efe9" d="M954.6,141.6L1136.0,141.6L1136.0,262.4L954.6,262.4ZM944.6,247.2L1126.0,247.2L1126.0,362.4L944.6,362.4ZM1104.6,241.6L1286.0,241.6L1286.0,362.4L1104.6,362.4Z"/>
<path fill="#b5d0d0" d="M951.1,138.1L1054.6,138.1L1056.4,152.4L1064.1,158.5L1070.2,157.6L1078.0,152.4L1083.2,138.1L1086.7,138.1L1091.0,155.0L1094.5,170.6L1098.8,182.7L1109.2,182.7L1119.6,176.7L1124.8,161.9L1122.2,150.7L1123.9,138.1L1136.0,138.1L1136.0,188.8L1128.3,190.5L1119.6,193.1L1109.2,194.0L1102.3,197.4L1095.3,194.0L1084.9,197.4L1078.0,194.0L1072.8,197.4L1067.6,201.8L1063.3,202.6L1050.3,207.8L1041.6,213.0L1034.7,218.2L1031.2,228.6L1028.6,235.6L1020.8,239.0L1015.6,246.0L1007.0,254.6L1001.8,265.9L951.1,265.9ZM941.1,238.1L1007.4,238.1L998.7,248.1L997.0,250.7L1003.9,254.1L1009.1,256.7L1013.4,263.7L1016.9,272.3L1016.9,281.0L1016.0,290.5L1005.6,290.5L993.5,290.1L979.7,289.2L972.7,292.2L968.4,297.4L969.3,307.8L971.0,320.0L972.7,328.6L973.6,338.2L981.4,339.0L988.3,342.5L991.8,346.8L993.5,349.4L990.0,354.6L986.6,365.9L941.1,365.9ZM993.5,349.4L998.7,346.0L1010.8,337.3L1016.9,330.4L1023.0,325.2L1023.0,318.2L1031.6,309.6L1040.3,302.6L1042.0,294.0L1049.0,291.4L1057.6,293.1L1066.3,289.6L1073.2,284.4L1080.1,285.3L1085.3,290.5L1092.3,297.4L1097.5,302.6L1105.3,311.3L1113.9,318.2L1120.8,325.2L1117.4,330.4L1118.3,335.6L1126.0,333.8L1126.0,365.9L1087.1,365.9L1085.3,347.7L1081.0,339.0L1070.6,340.8L1057.6,339.0L1040.3,340.8L1023.0,341.6L1005.6,343.4ZM1094.0,275.8L1100.9,273.2L1107.0,278.4L1109.6,287.0L1116.5,294.0L1126.0,299.2L1126.0,307.8L1113.9,300.9L1105.3,292.2L1097.5,283.6ZM1101.1,274.9L1111.9,279.2L1122.3,290.5L1132.7,302.6L1135.3,309.6L1137.9,318.2L1141.4,328.6L1145.7,337.3L1150.9,341.6L1155.2,339.0L1151.8,333.8L1157.0,331.2L1162.2,337.3L1167.4,333.8L1163.9,325.2L1157.0,320.0L1152.6,313.9L1160.4,309.6L1170.8,307.8L1174.3,302.6L1176.9,307.8L1179.5,313.0L1178.6,320.0L1180.4,328.6L1183.0,337.3L1191.6,342.5L1200.3,341.6L1209.0,339.9L1217.6,342.5L1228.0,341.6L1229.7,365.9L1101.1,365.9L1101.1,341.6L1110.2,333.0L1113.7,324.3L1118.0,318.2L1122.3,320.0L1128.4,317.4L1124.9,311.3L1118.0,302.6L1110.2,294.0L1101.1,287.0ZM1191.6,264.5L1200.3,265.4L1209.0,267.1L1217.6,270.6L1226.3,278.4L1236.7,280.1L1247.1,287.0L1260.1,294.0L1260.9,302.6L1252.3,308.7L1234.9,309.6L1217.6,306.1L1204.6,306.1L1191.6,304.4L1184.7,294.0L1187.3,282.7ZM1240.1,268.0L1252.3,266.3L1254.0,274.9L1243.6,276.7Z"/>
<path fill="#f2efe9" d="M967.1,197.4L976.7,195.7L981.0,196.6L988.8,200.9L989.7,207.8L987.9,215.6L983.6,220.0L972.3,222.6L965.4,218.2L967.1,211.3L968.9,204.4ZM994.0,155.0L1000.9,152.4L1006.1,154.1L1004.4,159.3L1008.7,162.8L1013.9,164.5L1011.3,170.6L1017.4,197.4L1023.4,202.6L1026.0,209.6L1031.2,212.2L1033.0,218.2L1030.4,225.2L1024.3,228.6L1015.6,230.4L1007.0,232.1L996.6,235.6L993.1,233.8L1000.0,226.9L995.7,223.4L997.4,220.0L1005.2,216.5L1003.5,213.0L1007.0,208.7L998.3,206.1L1000.0,202.6L998.3,198.3L991.4,190.5L989.7,181.8L991.4,170.6L988.8,164.5L991.4,159.3ZM1070.2,170.6L1076.3,164.5L1082.3,163.7L1084.1,168.0L1081.5,174.9L1084.9,181.0L1083.2,187.0L1081.5,197.4L1072.8,198.3L1071.1,183.6ZM1086.7,178.4L1093.6,176.7L1097.1,183.6L1093.6,190.5L1087.5,188.8ZM1074.1,297.4L1078.4,295.7L1080.1,302.6L1077.5,308.7L1074.1,306.1ZM1071.5,310.4L1078.4,308.7L1080.1,318.2L1078.4,325.2L1072.3,323.4ZM1095.7,332.1L1109.6,330.4L1111.3,338.2L1105.3,340.8L1097.5,335.6ZM1038.6,318.2L1043.8,318.2L1042.9,322.6ZM1157.0,349.4L1165.6,348.5L1174.3,351.1L1165.6,352.9ZM1209.0,352.0L1217.6,350.3L1219.3,352.9L1211.5,353.7Z"/>
<path fill="#f2efe9" d="M1054.7,251.7L1175.2,251.7L1175.2,342.3L1054.7,342.3ZM574.6,201.6L736.0,201.6L736.0,302.4L574.6,302.4Z"/>
<path fill="#b5d0d0" d="M1052.1,292.3L1061.5,291.0L1068.0,285.8L1074.5,283.8L1081.0,285.8L1082.9,291.0L1084.9,296.2L1090.1,302.7L1096.6,310.5L1104.4,317.0L1110.2,320.9L1116.7,322.8L1119.3,327.4L1118.0,330.6L1121.3,328.7L1121.9,322.2L1123.2,315.7L1126.5,317.6L1129.1,317.0L1126.5,310.5L1120.0,305.9L1113.5,298.8L1108.3,293.6L1103.1,288.4L1097.2,282.5L1095.3,274.1L1101.8,274.1L1107.0,279.3L1113.5,285.8L1120.0,292.3L1126.5,297.5L1133.0,302.7L1134.9,305.3L1135.6,313.7L1136.9,319.6L1139.5,323.5L1142.1,327.4L1146.0,330.0L1149.2,335.2L1152.5,344.9L1052.1,344.9ZM1151.2,309.8L1162.2,309.8L1175.2,308.5L1175.2,344.9L1159.0,344.9L1156.4,336.5L1160.3,328.7L1156.4,323.5L1152.5,317.0ZM697.7,198.8L736.0,198.8L736.0,305.2L621.2,305.2L625.5,295.1L631.3,285.8L640.0,282.9L644.3,278.5L654.4,274.2L660.2,269.1L654.4,267.0L654.4,261.9L656.6,256.9L647.2,254.0L658.0,251.8L658.0,245.3L647.2,243.5L636.4,247.5L627.0,256.2L621.9,261.9L625.5,252.5L634.2,245.3L640.0,239.5L647.2,235.2L661.6,234.5L681.9,232.3L690.5,225.8L702.1,222.2L706.4,216.4L707.1,207.8ZM571.8,210.7L576.4,213.6L577.2,217.9L571.8,223.7Z"/>
<path fill="#f2efe9" d="M1095.3,331.3L1103.1,330.0L1110.9,330.6L1108.9,336.5L1101.8,337.8L1096.6,335.2ZM1071.2,309.2L1077.7,307.9L1079.7,317.0L1078.4,324.1L1072.5,324.8L1071.2,317.0ZM1073.2,296.2L1078.4,294.9L1079.7,302.7L1076.4,305.9L1073.8,302.7ZM686.2,255.4L693.4,242.4L699.2,228.0L707.1,222.9L705.0,232.3L702.1,238.1L707.9,236.7L718.7,242.4L720.1,248.9L723.0,254.0L722.3,264.1L716.5,265.5L712.2,259.8L705.0,261.9L697.7,258.3ZM657.3,237.4L665.3,239.5L672.5,243.9L670.3,245.3L661.6,242.4ZM647.9,285.0L654.4,277.1L661.6,273.5L669.6,270.6L676.1,267.0L683.3,269.1L681.9,272.0L674.6,275.6L661.6,282.1L650.8,290.8ZM661.6,267.0L671.0,267.7L668.9,269.1L662.4,268.8Z"/>
</svg>
<svg x="165" y="258" width="2048" height="769" viewBox="165 258 2048 769" overflow="hidden">
<path d="M506.0,503.5L647.7,500.6L650.5,505.0L685.2,509.3L708.3,522.3L719.9,541.1L717.0,561.3L738.6,554.1L753.1,544.0L761.7,536.0L779.0,536.0L789.2,526.6L795.0,516.5L803.6,520.9L805.1,535.3L808.0,538.2M386.4,258.0L386.4,390.5L393.0,391.5L407.3,405.9L418.6,397.7L432.0,412.0L440.2,432.6L449.5,438.7L449.5,447.0L446.4,450.0M537.8,629.0L558.5,636.1L573.6,635.4L574.4,633.0L582.3,633.8L595.0,644.1L603.0,650.4L606.1,646.5L612.5,647.3L622.0,656.8L626.8,664.7L631.6,669.5M1450.0,485.6L1465.2,491.0L1478.2,480.1L1504.2,486.6L1536.6,480.1L1538.8,460.6L1562.6,449.8L1580.0,445.5L1593.0,452.0L1608.1,462.8L1625.4,454.2L1645.0,486.6L1666.6,486.6L1683.9,501.8M1683.9,501.8L1710.0,491.0L1731.6,495.3L1748.9,478.0L1761.9,482.3L1779.2,491.0L1805.2,501.8L1818.2,499.6L1839.9,493.1L1852.9,499.6L1870.2,508.3L1868.0,491.0L1874.5,471.5L1894.0,462.8L1904.8,465.0L1915.6,497.5L1933.0,508.3M1683.9,501.8L1677.4,510.5L1705.6,530.0L1731.6,551.6L1764.1,560.3L1787.9,560.3L1818.2,547.3L1826.9,532.1L1861.5,521.3L1870.2,519.1M1683.9,501.8L1662.3,517.0L1645.0,538.6L1647.1,551.6L1634.1,564.6L1608.8,615.3L1635.5,633.8L1649.9,644.0L1691.0,658.4L1695.1,670.7L1732.0,650.2L1744.4,658.4L1752.6,670.7L1760.0,690.0L1775.0,700.0L1800.0,694.0M1139.7,661.3L1153.6,676.9L1207.3,711.5L1255.8,687.3L1273.1,690.8L1323.4,708.1L1332.0,696.0L1332.0,633.6M1332.0,696.0L1397.9,696.0M1153.6,676.9L1157.0,734.0L1122.4,735.8M1233.3,616.2L1243.7,640.5L1241.9,668.2L1255.8,687.3M1181.3,607.6L1179.6,628.4L1139.7,661.3L1139.7,700.0L1093.0,700.0M1207.3,711.5L1212.0,745.0L1190.0,760.0L1160.0,768.0M1273.1,690.8L1280.0,730.0L1268.0,770.0L1290.0,800.0L1340.0,790.0L1370.0,760.0L1400.0,740.0M1290.0,800.0L1300.0,830.0L1280.0,870.0L1340.0,880.0L1360.0,860.0L1405.0,860.0M1280.0,870.0L1300.0,920.0L1345.0,920.0L1360.0,900.0M1300.0,920.0L1305.0,980.0L1320.0,1000.0L1345.0,965.0M790.7,814.6L792.8,848.1L769.8,864.8L774.0,877.4L797.0,881.6L817.9,879.5L828.4,896.2L845.2,902.5L861.9,927.6L855.6,938.1L834.7,938.1L832.6,952.8L855.6,963.2L876.6,975.8M797.0,881.6L794.9,902.5L790.7,929.7L801.2,957.0L799.1,986.3L790.7,1027.0M799.1,957.0L824.2,950.7L855.6,965.3L859.8,984.2L876.6,982.1L882.8,973.7M843.0,774.8L838.9,795.7L847.3,814.6L864.0,814.6L876.6,806.2L893.3,799.9M771.9,768.5L782.3,783.2L801.2,789.4L807.5,812.5L824.2,814.6L843.0,793.6L845.2,774.8M742.6,816.7L759.3,825.0L774.0,835.5L790.7,848.1M1179.5,550.2L1203.9,555.8L1218.9,555.8M1163.0,541.0L1166.0,566.0L1162.0,590.0M1228.0,480.0L1226.0,492.0L1232.0,507.0L1226.0,520.0L1228.0,530.0L1240.0,535.0L1250.0,528.0L1262.0,530.0L1270.0,540.0L1290.0,548.0M1266.0,470.0L1272.0,490.0L1270.0,500.0L1284.0,506.0L1300.0,500.0L1316.0,506.0L1330.0,520.0L1340.0,530.0L1356.0,536.0L1366.0,556.0M1316.0,450.0L1320.0,470.0L1338.0,476.0L1356.0,470.0L1372.0,480.0L1380.0,500.0M1300.0,520.0L1304.0,540.0L1318.0,556.0L1300.0,566.0M1326.0,556.0L1350.0,548.0L1366.0,556.0L1380.0,566.0L1420.0,560.0L1460.0,590.0M1400.0,566.0L1430.0,585.0L1460.0,640.0L1470.0,690.0L1510.0,700.0M1420.0,600.0L1450.0,620.0L1470.0,640.0M1400.0,640.0L1440.0,660.0L1480.0,690.0L1500.0,660.0M1520.0,560.0L1550.0,600.0L1580.0,640.0L1600.0,680.0L1620.0,700.0" fill="none" stroke="#8a8a8a" stroke-width="0.8" stroke-opacity="0.8" stroke-linejoin="round"/>
<g font-family="Liberation Sans, sans-serif" text-anchor="middle" stroke="#ffffff" stroke-width="2.2" stroke-linejoin="round" paint-order="stroke">
<text x="645" y="272.8" font-size="10.5" fill="#9b5aa0" stroke-opacity="0.85">Canada</text>
<text x="317" y="336.8" font-size="10.5" fill="#9b5aa0" stroke-opacity="0.85">United States</text>
<text x="317" y="346.8" font-size="10.5" fill="#9b5aa0" stroke-opacity="0.85">of America</text>
<text x="625" y="574.8" font-size="10.5" fill="#9b5aa0" stroke-opacity="0.85">United States</text>
<text x="625" y="584.8" font-size="10.5" fill="#9b5aa0" stroke-opacity="0.85">of America</text>
<text x="597" y="680.8" font-size="10.5" fill="#9b5aa0" stroke-opacity="0.85">Estados Unidos</text>
<text x="597" y="690.8" font-size="10.5" fill="#9b5aa0" stroke-opacity="0.85">Mexicanos</text>
<text x="757" y="803.8" font-size="10.5" fill="#9b5aa0" stroke-opacity="0.85">Colombia</text>
<text x="756" y="886.8" font-size="10.5" fill="#9b5aa0" stroke-opacity="0.85">Perú</text>
<text x="888" y="891.8" font-size="10.5" fill="#9b5aa0" stroke-opacity="0.85">Brasil</text>
<text x="821" y="923.8" font-size="10.5" fill="#9b5aa0" stroke-opacity="0.85">Bolivia</text>
<text x="1261" y="321.8" font-size="10.5" fill="#9b5aa0" stroke-opacity="0.85">Norge</text>
<text x="1335" y="341.8" font-size="10.5" fill="#9b5aa0" stroke-opacity="0.85">Suomi</text>
<text x="1286" y="360.8" font-size="10.5" fill="#9b5aa0" stroke-opacity="0.85">Sverige</text>
<text x="1170" y="451.8" font-size="10.5" fill="#9b5aa0" stroke-opacity="0.85">United Kingdom</text>
<text x="1376" y="508.8" font-size="10.5" fill="#9b5aa0" stroke-opacity="0.85">Україна</text>
<text x="1387" y="584.8" font-size="10.5" fill="#9b5aa0" stroke-opacity="0.85">Türkiye</text>
<text x="1571" y="511.8" font-size="10.5" fill="#9b5aa0" stroke-opacity="0.85">Казахстан</text>
<text x="1775" y="523.8" font-size="10.5" fill="#9b5aa0" stroke-opacity="0.85">Монгол улс</text>
<text x="1218" y="657.8" font-size="10.5" fill="#9b5aa0" stroke-opacity="0.85">Algérie الجزائر</text>
<text x="1291" y="657.8" font-size="10.5" fill="#9b5aa0" stroke-opacity="0.85">ليبيا</text>
<text x="1360" y="663.8" font-size="10.5" fill="#9b5aa0" stroke-opacity="0.85">مصر</text>
<text x="1130" y="703.8" font-size="10.5" fill="#9b5aa0" stroke-opacity="0.85">موريتانيا</text>
<text x="1169" y="726.8" font-size="10.5" fill="#9b5aa0" stroke-opacity="0.85">Mali</text>
<text x="1243" y="726.8" font-size="10.5" fill="#9b5aa0" stroke-opacity="0.85">Niger</text>
<text x="1296" y="738.8" font-size="10.5" fill="#9b5aa0" stroke-opacity="0.85">Tchad - تشاد</text>
<text x="1360" y="726.8" font-size="10.5" fill="#9b5aa0" stroke-opacity="0.85">Sudan - السودان</text>
<text x="1415" y="777.8" font-size="10.5" fill="#9b5aa0" stroke-opacity="0.85">ኢትዮጵያ Ethiopia</text>
<text x="1323" y="838.8" font-size="10.5" fill="#9b5aa0" stroke-opacity="0.85">République démocratique</text>
<text x="1323" y="849.8" font-size="10.5" fill="#9b5aa0" stroke-opacity="0.85">du Congo</text>
<text x="1288" y="898.8" font-size="10.5" fill="#9b5aa0" stroke-opacity="0.85">Angola</text>
<text x="1330" y="1001.8" font-size="10.5" fill="#9b5aa0" stroke-opacity="0.85">South Africa</text>
<text x="1497" y="624.8" font-size="10.5" fill="#9b5aa0" stroke-opacity="0.85">ایران</text>
<text x="1582" y="641.8" font-size="10.5" fill="#9b5aa0" stroke-opacity="0.85">پاکستان</text>
<text x="1438" y="674.8" font-size="10.5" fill="#9b5aa0" stroke-opacity="0.85">حدود المملكة</text>
<text x="1438" y="684.8" font-size="10.5" fill="#9b5aa0" stroke-opacity="0.85">العربية السعودية</text>
<text x="1641" y="693.8" font-size="10.5" fill="#9b5aa0" stroke-opacity="0.85">India</text>
<text x="1862" y="843.8" font-size="10.5" fill="#9b5aa0" stroke-opacity="0.85">Indonesia</text>
<text x="2028" y="859.8" font-size="10.5" fill="#9b5aa0" stroke-opacity="0.85">Papua Niugini</text>
<text x="1955" y="982.8" font-size="10.5" fill="#9b5aa0" stroke-opacity="0.85">Australia</text>
<text x="480" y="503.5" font-size="9.5" fill="#6e6e6e" stroke-opacity="0.6">Vancouver</text>
<text x="493" y="594.5" font-size="9.5" fill="#6e6e6e" stroke-opacity="0.6">San Francisco</text>
<text x="518" y="620.5" font-size="9.5" fill="#6e6e6e" stroke-opacity="0.6">Los Angeles</text>
<text x="690" y="565.5" font-size="9.5" fill="#6e6e6e" stroke-opacity="0.6">Chicago</text>
<text x="737" y="550.5" font-size="9.5" fill="#6e6e6e" stroke-opacity="0.6">Toronto</text>
<text x="767" y="571.5" font-size="9.5" fill="#6e6e6e" stroke-opacity="0.6">New York</text>
<text x="757" y="585.5" font-size="9.5" fill="#6e6e6e" stroke-opacity="0.6">Washington D.C.</text>
<text x="709" y="622.5" font-size="9.5" fill="#6e6e6e" stroke-opacity="0.6">Atlanta</text>
<text x="646" y="649.5" font-size="9.5" fill="#6e6e6e" stroke-opacity="0.6">Houston</text>
<text x="625" y="714.5" font-size="9.5" fill="#6e6e6e" stroke-opacity="0.6">Mexico City</text>
<text x="731" y="674.5" font-size="9.5" fill="#6e6e6e" stroke-opacity="0.6">Miami</text>
<text x="805" y="766.5" font-size="9.5" fill="#6e6e6e" stroke-opacity="0.6">Caracas</text>
<text x="751" y="896.5" font-size="9.5" fill="#6e6e6e" stroke-opacity="0.6">Lima</text>
<text x="943" y="961.5" font-size="9.5" fill="#6e6e6e" stroke-opacity="0.6">Rio de Janeiro</text>
<text x="787" y="1028.5" font-size="9.5" fill="#6e6e6e" stroke-opacity="0.6">Santiago</text>
<text x="1291" y="405.5" font-size="9.5" fill="#6e6e6e" stroke-opacity="0.6">Stockholm</text>
<text x="1216" y="476.5" font-size="9.5" fill="#6e6e6e" stroke-opacity="0.6">Amsterdam</text>
<text x="1265" y="475.5" font-size="9.5" fill="#6e6e6e" stroke-opacity="0.6">Berlin</text>
<text x="1182" y="484.5" font-size="9.5" fill="#6e6e6e" stroke-opacity="0.6">London</text>
<text x="1202" y="508.5" font-size="9.5" fill="#6e6e6e" stroke-opacity="0.6">Paris</text>
<text x="1282" y="513.5" font-size="9.5" fill="#6e6e6e" stroke-opacity="0.6">Vienna</text>
<text x="1168" y="575.5" font-size="9.5" fill="#6e6e6e" stroke-opacity="0.6">Madrid</text>
<text x="1257" y="565.5" font-size="9.5" fill="#6e6e6e" stroke-opacity="0.6">Rome</text>
<text x="1326" y="596.5" font-size="9.5" fill="#6e6e6e" stroke-opacity="0.6">Athens</text>
<text x="1352" y="569.5" font-size="9.5" fill="#6e6e6e" stroke-opacity="0.6">Istanbul</text>
<text x="1145" y="624.5" font-size="9.5" fill="#6e6e6e" stroke-opacity="0.6">Casablanca</text>
<text x="1366" y="648.5" font-size="9.5" fill="#6e6e6e" stroke-opacity="0.6">Cairo</text>
<text x="1208" y="790.5" font-size="9.5" fill="#6e6e6e" stroke-opacity="0.6">Lagos</text>
<text x="1277" y="852.5" font-size="9.5" fill="#6e6e6e" stroke-opacity="0.6">Kinshasa</text>
<text x="1398" y="834.5" font-size="9.5" fill="#6e6e6e" stroke-opacity="0.6">Nairobi</text>
<text x="1348" y="981.5" font-size="9.5" fill="#6e6e6e" stroke-opacity="0.6">Johannesburg</text>
<text x="1441" y="625.5" font-size="9.5" fill="#6e6e6e" stroke-opacity="0.6">Baghdad</text>
<text x="1481" y="609.5" font-size="9.5" fill="#6e6e6e" stroke-opacity="0.6">Tehran</text>
<text x="1502" y="679.5" font-size="9.5" fill="#6e6e6e" stroke-opacity="0.6">Dubai</text>
<text x="1583" y="568.5" font-size="9.5" fill="#6e6e6e" stroke-opacity="0.6">Tashkent</text>
<text x="1582" y="617.5" font-size="9.5" fill="#6e6e6e" stroke-opacity="0.6">Kabul</text>
<text x="1627" y="657.5" font-size="9.5" fill="#6e6e6e" stroke-opacity="0.6">New Delhi</text>
<text x="1631" y="717.5" font-size="9.5" fill="#6e6e6e" stroke-opacity="0.6">Mumbai</text>
<text x="1627" y="749.5" font-size="9.5" fill="#6e6e6e" stroke-opacity="0.6">Bangalore</text>
<text x="1691" y="696.5" font-size="9.5" fill="#6e6e6e" stroke-opacity="0.6">Kolkata</text>
<text x="1686" y="549.5" font-size="9.5" fill="#6e6e6e" stroke-opacity="0.6">Urumqi</text>
<text x="1851" y="580.5" font-size="9.5" fill="#6e6e6e" stroke-opacity="0.6">Beijing</text>
<text x="1910" y="596.5" font-size="9.5" fill="#6e6e6e" stroke-opacity="0.6">Seoul</text>
<text x="1959" y="616.5" font-size="9.5" fill="#6e6e6e" stroke-opacity="0.6">Osaka</text>
<text x="1984" y="610.5" font-size="9.5" fill="#6e6e6e" stroke-opacity="0.6">Tokyo</text>
<text x="1873" y="640.5" font-size="9.5" fill="#6e6e6e" stroke-opacity="0.6">Shanghai</text>
<text x="1783" y="644.5" font-size="9.5" fill="#6e6e6e" stroke-opacity="0.6">Chongqing</text>
<text x="1880" y="680.5" font-size="9.5" fill="#6e6e6e" stroke-opacity="0.6">Taipei</text>
<text x="1830" y="697.5" font-size="9.5" fill="#6e6e6e" stroke-opacity="0.6">Hong Kong</text>
<text x="1760" y="750.5" font-size="9.5" fill="#6e6e6e" stroke-opacity="0.6">Bangkok</text>
<text x="1874" y="741.5" font-size="9.5" fill="#6e6e6e" stroke-opacity="0.6">Manila</text>
<text x="1780" y="820.5" font-size="9.5" fill="#6e6e6e" stroke-opacity="0.6">Singapore</text>
<text x="1800" y="862.5" font-size="9.5" fill="#6e6e6e" stroke-opacity="0.6">Jakarta</text>
</g>
<path d="M1402.0,439.8L493.8,513.8M1402.0,439.8L769.8,531.8M1402.0,439.8L748.0,581.8M1402.0,439.8L515.9,617.1M1402.0,439.8L569.0,671.9M1402.0,439.8L625.2,683.8M1402.0,439.8L732.0,670.8M1402.0,439.8L807.9,762.8M1402.0,439.8L757.8,795.9M1402.0,439.8L846.0,896.6M1402.0,439.8L968.7,897.7M1402.0,439.8L915.9,914.0M1402.0,439.8L877.8,941.9M1402.0,439.8L922.6,960.7M1402.0,439.8L896.7,1002.6M1402.0,439.8L1166.9,441.8M1402.0,439.8L1201.9,504.1M1402.0,439.8L1329.8,391.8M1402.0,439.8L1337.9,489.0M1402.0,439.8L1402.0,539.0M1402.0,439.8L1426.0,471.9M1402.0,439.8L1394.9,493.6M1402.0,439.8L1441.9,504.4M1402.0,439.8L1474.0,464.8M1402.0,439.8L1140.9,562.9M1402.0,439.8L1270.0,568.9M1402.0,439.8L1352.8,566.9M1402.0,439.8L1144.9,620.1M1402.0,439.8L1387.0,631.0M1402.0,439.8L1533.0,427.7M1402.0,439.8L1683.9,458.9M1402.0,439.8L1781.8,472.8M1402.0,439.8L1850.7,575.9M1402.0,439.8L1908.8,530.0M1402.0,439.8L1481.0,605.8M1402.0,439.8L1534.9,648.0M1402.0,439.8L1627.0,653.9M1402.0,439.8L1482.1,675.7M1402.0,439.8L1570.0,676.8M1402.0,439.8L1645.0,727.0M1402.0,439.8L1784.0,635.0M1402.0,439.8L1871.9,642.6M1402.0,439.8L1772.7,675.7M1402.0,439.8L1833.0,688.1M1402.0,439.8L1759.8,744.9M1402.0,439.8L1794.8,761.8M1402.0,439.8L1874.0,736.0M1402.0,439.8L1795.9,858.7M1402.0,439.8L1090.8,738.9M1402.0,439.8L1274.0,754.0M1402.0,439.8L1515.9,941.0" stroke="#707070" stroke-opacity="0.5" stroke-width="0.8" fill="none"/>
<path fill="#ffba00" fill-rule="evenodd" d="M508.70,513.80A14.9,14.9 0 1 0 478.90,513.80A14.9,14.9 0 1 0 508.70,513.80ZM501.10,513.80A7.3,7.3 0 1 0 486.50,513.80A7.3,7.3 0 1 0 501.10,513.80Z"/>
<path fill="#ffba00" fill-rule="evenodd" d="M789.70,531.80A19.9,19.9 0 1 0 749.90,531.80A19.9,19.9 0 1 0 789.70,531.80ZM779.80,531.80A10.0,10.0 0 1 0 759.80,531.80A10.0,10.0 0 1 0 779.80,531.80Z"/>
<path fill="#ffba00" d="M742.42,557.64A24.8,24.8 0 0 1 772.80,581.80L760.40,581.80A12.4,12.4 0 0 0 745.21,569.72Z"/>
<path fill="#2b8fa6" d="M772.80,581.80A24.8,24.8 0 1 1 742.42,557.64L745.21,569.72A12.4,12.4 0 1 0 760.40,581.80Z"/>
<path fill="#ef6a58" d="M536.70,603.59A24.8,24.8 0 0 1 540.70,617.10L528.30,617.10A12.4,12.4 0 0 0 526.30,610.35Z"/>
<path fill="#2b8fa6" d="M540.70,617.10A24.8,24.8 0 0 1 517.20,641.87L516.55,629.48A12.4,12.4 0 0 0 528.30,617.10Z"/>
<path fill="#ffba00" d="M517.20,641.87A24.8,24.8 0 1 1 536.70,603.59L526.30,610.35A12.4,12.4 0 1 0 516.55,629.48Z"/>
<path fill="#ffba00" fill-rule="evenodd" d="M583.90,671.90A14.9,14.9 0 1 0 554.10,671.90A14.9,14.9 0 1 0 583.90,671.90ZM576.30,671.90A7.3,7.3 0 1 0 561.70,671.90A7.3,7.3 0 1 0 576.30,671.90Z"/>
<path fill="#ffba00" fill-rule="evenodd" d="M640.10,683.80A14.9,14.9 0 1 0 610.30,683.80A14.9,14.9 0 1 0 640.10,683.80ZM632.50,683.80A7.3,7.3 0 1 0 617.90,683.80A7.3,7.3 0 1 0 632.50,683.80Z"/>
<path fill="#ffba00" fill-rule="evenodd" d="M746.90,670.80A14.9,14.9 0 1 0 717.10,670.80A14.9,14.9 0 1 0 746.90,670.80ZM739.30,670.80A7.3,7.3 0 1 0 724.70,670.80A7.3,7.3 0 1 0 739.30,670.80Z"/>
<path fill="#ffba00" fill-rule="evenodd" d="M822.80,762.80A14.9,14.9 0 1 0 793.00,762.80A14.9,14.9 0 1 0 822.80,762.80ZM815.20,762.80A7.3,7.3 0 1 0 800.60,762.80A7.3,7.3 0 1 0 815.20,762.80Z"/>
<path fill="#ffba00" fill-rule="evenodd" d="M772.70,795.90A14.9,14.9 0 1 0 742.90,795.90A14.9,14.9 0 1 0 772.70,795.90ZM765.10,795.90A7.3,7.3 0 1 0 750.50,795.90A7.3,7.3 0 1 0 765.10,795.90Z"/>
<path fill="#ffba00" fill-rule="evenodd" d="M860.90,896.60A14.9,14.9 0 1 0 831.10,896.60A14.9,14.9 0 1 0 860.90,896.60ZM853.30,896.60A7.3,7.3 0 1 0 838.70,896.60A7.3,7.3 0 1 0 853.30,896.60Z"/>
<path fill="#ffba00" fill-rule="evenodd" d="M983.60,897.70A14.9,14.9 0 1 0 953.80,897.70A14.9,14.9 0 1 0 983.60,897.70ZM976.00,897.70A7.3,7.3 0 1 0 961.40,897.70A7.3,7.3 0 1 0 976.00,897.70Z"/>
<path fill="#ffba00" fill-rule="evenodd" d="M930.80,914.00A14.9,14.9 0 1 0 901.00,914.00A14.9,14.9 0 1 0 930.80,914.00ZM923.20,914.00A7.3,7.3 0 1 0 908.60,914.00A7.3,7.3 0 1 0 923.20,914.00Z"/>
<path fill="#ffba00" fill-rule="evenodd" d="M892.70,941.90A14.9,14.9 0 1 0 862.90,941.90A14.9,14.9 0 1 0 892.70,941.90ZM885.10,941.90A7.3,7.3 0 1 0 870.50,941.90A7.3,7.3 0 1 0 885.10,941.90Z"/>
<path fill="#ffba00" fill-rule="evenodd" d="M937.50,960.70A14.9,14.9 0 1 0 907.70,960.70A14.9,14.9 0 1 0 937.50,960.70ZM929.90,960.70A7.3,7.3 0 1 0 915.30,960.70A7.3,7.3 0 1 0 929.90,960.70Z"/>
<path fill="#ffba00" fill-rule="evenodd" d="M911.60,1002.60A14.9,14.9 0 1 0 881.80,1002.60A14.9,14.9 0 1 0 911.60,1002.60ZM904.00,1002.60A7.3,7.3 0 1 0 889.40,1002.60A7.3,7.3 0 1 0 904.00,1002.60Z"/>
<path fill="#2b8fa6" fill-rule="evenodd" d="M1181.80,441.80A14.9,14.9 0 1 0 1152.00,441.80A14.9,14.9 0 1 0 1181.80,441.80ZM1174.20,441.80A7.3,7.3 0 1 0 1159.60,441.80A7.3,7.3 0 1 0 1174.20,441.80Z"/>
<path fill="#ffba00" d="M1228.63,490.48A30.0,30.0 0 0 1 1231.90,504.10L1217.00,504.10A15.1,15.1 0 0 0 1215.35,497.24Z"/>
<path fill="#2b8fa6" d="M1231.90,504.10A30.0,30.0 0 1 1 1228.63,490.48L1215.35,497.24A15.1,15.1 0 1 0 1217.00,504.10Z"/>
<path fill="#ffba00" d="M1359.14,385.56A30.0,30.0 0 0 1 1359.80,391.80L1344.90,391.80A15.1,15.1 0 0 0 1344.57,388.66Z"/>
<path fill="#2b8fa6" d="M1359.80,391.80A30.0,30.0 0 1 1 1359.14,385.56L1344.57,388.66A15.1,15.1 0 1 0 1344.90,391.80Z"/>
<path fill="#ffba00" d="M1402.00,415.00A24.8,24.8 0 0 1 1426.80,439.80L1414.40,439.80A12.4,12.4 0 0 0 1402.00,427.40Z"/>
<path fill="#2b8fa6" d="M1426.80,439.80A24.8,24.8 0 1 1 1402.00,415.00L1402.00,427.40A12.4,12.4 0 1 0 1414.40,439.80Z"/>
<path fill="#ffba00" d="M1367.90,488.48A30.0,30.0 0 0 1 1367.90,489.00L1353.00,489.00A15.1,15.1 0 0 0 1353.00,488.74Z"/>
<path fill="#2b8fa6" d="M1367.90,489.00A30.0,30.0 0 1 1 1367.90,488.48L1353.00,488.74A15.1,15.1 0 1 0 1353.00,489.00Z"/>
<path fill="#2b8fa6" fill-rule="evenodd" d="M1426.80,539.00A24.8,24.8 0 1 0 1377.20,539.00A24.8,24.8 0 1 0 1426.80,539.00ZM1414.40,539.00A12.4,12.4 0 1 0 1389.60,539.00A12.4,12.4 0 1 0 1414.40,539.00Z"/>
<path fill="#ffba00" fill-rule="evenodd" d="M1440.90,471.90A14.9,14.9 0 1 0 1411.10,471.90A14.9,14.9 0 1 0 1440.90,471.90ZM1433.30,471.90A7.3,7.3 0 1 0 1418.70,471.90A7.3,7.3 0 1 0 1433.30,471.90Z"/>
<path fill="#ffba00" fill-rule="evenodd" d="M1409.80,493.60A14.9,14.9 0 1 0 1380.00,493.60A14.9,14.9 0 1 0 1409.80,493.60ZM1402.20,493.60A7.3,7.3 0 1 0 1387.60,493.60A7.3,7.3 0 1 0 1402.20,493.60Z"/>
<path fill="#2b8fa6" fill-rule="evenodd" d="M1456.80,504.40A14.9,14.9 0 1 0 1427.00,504.40A14.9,14.9 0 1 0 1456.80,504.40ZM1449.20,504.40A7.3,7.3 0 1 0 1434.60,504.40A7.3,7.3 0 1 0 1449.20,504.40Z"/>
<path fill="#2b8fa6" fill-rule="evenodd" d="M1488.90,464.80A14.9,14.9 0 1 0 1459.10,464.80A14.9,14.9 0 1 0 1488.90,464.80ZM1481.30,464.80A7.3,7.3 0 1 0 1466.70,464.80A7.3,7.3 0 1 0 1481.30,464.80Z"/>
<path fill="#ffba00" fill-rule="evenodd" d="M1155.80,562.90A14.9,14.9 0 1 0 1126.00,562.90A14.9,14.9 0 1 0 1155.80,562.90ZM1148.20,562.90A7.3,7.3 0 1 0 1133.60,562.90A7.3,7.3 0 1 0 1148.20,562.90Z"/>
<path fill="#ffba00" fill-rule="evenodd" d="M1284.90,568.90A14.9,14.9 0 1 0 1255.10,568.90A14.9,14.9 0 1 0 1284.90,568.90ZM1277.30,568.90A7.3,7.3 0 1 0 1262.70,568.90A7.3,7.3 0 1 0 1277.30,568.90Z"/>
<path fill="#ffba00" fill-rule="evenodd" d="M1367.70,566.90A14.9,14.9 0 1 0 1337.90,566.90A14.9,14.9 0 1 0 1367.70,566.90ZM1360.10,566.90A7.3,7.3 0 1 0 1345.50,566.90A7.3,7.3 0 1 0 1360.10,566.90Z"/>
<path fill="#ffba00" fill-rule="evenodd" d="M1159.80,620.10A14.9,14.9 0 1 0 1130.00,620.10A14.9,14.9 0 1 0 1159.80,620.10ZM1152.20,620.10A7.3,7.3 0 1 0 1137.60,620.10A7.3,7.3 0 1 0 1152.20,620.10Z"/>
<path fill="#ffba00" fill-rule="evenodd" d="M1406.90,631.00A19.9,19.9 0 1 0 1367.10,631.00A19.9,19.9 0 1 0 1406.90,631.00ZM1397.00,631.00A10.0,10.0 0 1 0 1377.00,631.00A10.0,10.0 0 1 0 1397.00,631.00Z"/>
<path fill="#ffba00" fill-rule="evenodd" d="M1547.90,427.70A14.9,14.9 0 1 0 1518.10,427.70A14.9,14.9 0 1 0 1547.90,427.70ZM1540.30,427.70A7.3,7.3 0 1 0 1525.70,427.70A7.3,7.3 0 1 0 1540.30,427.70Z"/>
<path fill="#2b8fa6" fill-rule="evenodd" d="M1708.70,458.90A24.8,24.8 0 1 0 1659.10,458.90A24.8,24.8 0 1 0 1708.70,458.90ZM1696.30,458.90A12.4,12.4 0 1 0 1671.50,458.90A12.4,12.4 0 1 0 1696.30,458.90Z"/>
<path fill="#2b8fa6" fill-rule="evenodd" d="M1801.70,472.80A19.9,19.9 0 1 0 1761.90,472.80A19.9,19.9 0 1 0 1801.70,472.80ZM1791.80,472.80A10.0,10.0 0 1 0 1771.80,472.80A10.0,10.0 0 1 0 1791.80,472.80Z"/>
<path fill="#ffba00" d="M1878.52,564.66A30.0,30.0 0 0 1 1880.70,575.90L1865.80,575.90A15.1,15.1 0 0 0 1864.70,570.24Z"/>
<path fill="#2b8fa6" d="M1880.70,575.90A30.0,30.0 0 1 1 1878.52,564.66L1864.70,570.24A15.1,15.1 0 1 0 1865.80,575.90Z"/>
<path fill="#ffba00" fill-rule="evenodd" d="M1923.70,530.00A14.9,14.9 0 1 0 1893.90,530.00A14.9,14.9 0 1 0 1923.70,530.00ZM1916.10,530.00A7.3,7.3 0 1 0 1901.50,530.00A7.3,7.3 0 1 0 1916.10,530.00Z"/>
<path fill="#ffba00" fill-rule="evenodd" d="M1495.90,605.80A14.9,14.9 0 1 0 1466.10,605.80A14.9,14.9 0 1 0 1495.90,605.80ZM1488.30,605.80A7.3,7.3 0 1 0 1473.70,605.80A7.3,7.3 0 1 0 1488.30,605.80Z"/>
<path fill="#ffba00" fill-rule="evenodd" d="M1549.80,648.00A14.9,14.9 0 1 0 1520.00,648.00A14.9,14.9 0 1 0 1549.80,648.00ZM1542.20,648.00A7.3,7.3 0 1 0 1527.60,648.00A7.3,7.3 0 1 0 1542.20,648.00Z"/>
<path fill="#ffba00" fill-rule="evenodd" d="M1641.90,653.90A14.9,14.9 0 1 0 1612.10,653.90A14.9,14.9 0 1 0 1641.90,653.90ZM1634.30,653.90A7.3,7.3 0 1 0 1619.70,653.90A7.3,7.3 0 1 0 1634.30,653.90Z"/>
<path fill="#ffba00" fill-rule="evenodd" d="M1497.00,675.70A14.9,14.9 0 1 0 1467.20,675.70A14.9,14.9 0 1 0 1497.00,675.70ZM1489.40,675.70A7.3,7.3 0 1 0 1474.80,675.70A7.3,7.3 0 1 0 1489.40,675.70Z"/>
<path fill="#ffba00" fill-rule="evenodd" d="M1584.90,676.80A14.9,14.9 0 1 0 1555.10,676.80A14.9,14.9 0 1 0 1584.90,676.80ZM1577.30,676.80A7.3,7.3 0 1 0 1562.70,676.80A7.3,7.3 0 1 0 1577.30,676.80Z"/>
<path fill="#ffba00" d="M1674.98,725.95A30.0,30.0 0 0 1 1675.00,727.00L1660.10,727.00A15.1,15.1 0 0 0 1660.09,726.47Z"/>
<path fill="#2b8fa6" d="M1675.00,727.00A30.0,30.0 0 1 1 1674.98,725.95L1660.09,726.47A15.1,15.1 0 1 0 1660.10,727.00Z"/>
<path fill="#ffba00" d="M1800.30,623.59A19.9,19.9 0 0 1 1803.90,635.00L1794.00,635.00A10.0,10.0 0 0 0 1792.19,629.26Z"/>
<path fill="#2b8fa6" d="M1803.90,635.00A19.9,19.9 0 1 1 1800.30,623.59L1792.19,629.26A10.0,10.0 0 1 0 1794.00,635.00Z"/>
<path fill="#2b8fa6" d="M1891.79,641.91A19.9,19.9 0 0 1 1891.72,644.33L1881.86,643.47A10.0,10.0 0 0 0 1881.89,642.25Z"/>
<path fill="#ffba00" d="M1891.72,644.33A19.9,19.9 0 1 1 1891.79,641.91L1881.89,642.25A10.0,10.0 0 1 0 1881.86,643.47Z"/>
<path fill="#ffba00" fill-rule="evenodd" d="M1787.60,675.70A14.9,14.9 0 1 0 1757.80,675.70A14.9,14.9 0 1 0 1787.60,675.70ZM1780.00,675.70A7.3,7.3 0 1 0 1765.40,675.70A7.3,7.3 0 1 0 1780.00,675.70Z"/>
<path fill="#2b8fa6" d="M1852.90,688.10A19.9,19.9 0 0 1 1851.04,696.51L1842.06,692.33A10.0,10.0 0 0 0 1843.00,688.10Z"/>
<path fill="#ffba00" d="M1851.04,696.51A19.9,19.9 0 1 1 1852.90,688.10L1843.00,688.10A10.0,10.0 0 1 0 1842.06,692.33Z"/>
<path fill="#ffba00" fill-rule="evenodd" d="M1779.70,744.90A19.9,19.9 0 1 0 1739.90,744.90A19.9,19.9 0 1 0 1779.70,744.90ZM1769.80,744.90A10.0,10.0 0 1 0 1749.80,744.90A10.0,10.0 0 1 0 1769.80,744.90Z"/>
<path fill="#ffba00" fill-rule="evenodd" d="M1809.70,761.80A14.9,14.9 0 1 0 1779.90,761.80A14.9,14.9 0 1 0 1809.70,761.80ZM1802.10,761.80A7.3,7.3 0 1 0 1787.50,761.80A7.3,7.3 0 1 0 1802.10,761.80Z"/>
<path fill="#ffba00" fill-rule="evenodd" d="M1888.90,736.00A14.9,14.9 0 1 0 1859.10,736.00A14.9,14.9 0 1 0 1888.90,736.00ZM1881.30,736.00A7.3,7.3 0 1 0 1866.70,736.00A7.3,7.3 0 1 0 1881.30,736.00Z"/>
<path fill="#ffba00" fill-rule="evenodd" d="M1810.80,858.70A14.9,14.9 0 1 0 1781.00,858.70A14.9,14.9 0 1 0 1810.80,858.70ZM1803.20,858.70A7.3,7.3 0 1 0 1788.60,858.70A7.3,7.3 0 1 0 1803.20,858.70Z"/>
<path fill="#ffba00" fill-rule="evenodd" d="M1105.70,738.90A14.9,14.9 0 1 0 1075.90,738.90A14.9,14.9 0 1 0 1105.70,738.90ZM1098.10,738.90A7.3,7.3 0 1 0 1083.50,738.90A7.3,7.3 0 1 0 1098.10,738.90Z"/>
<path fill="#ffba00" fill-rule="evenodd" d="M1288.90,754.00A14.9,14.9 0 1 0 1259.10,754.00A14.9,14.9 0 1 0 1288.90,754.00ZM1281.30,754.00A7.3,7.3 0 1 0 1266.70,754.00A7.3,7.3 0 1 0 1281.30,754.00Z"/>
<path fill="#ffba00" fill-rule="evenodd" d="M1530.80,941.00A14.9,14.9 0 1 0 1501.00,941.00A14.9,14.9 0 1 0 1530.80,941.00ZM1523.20,941.00A7.3,7.3 0 1 0 1508.60,941.00A7.3,7.3 0 1 0 1523.20,941.00Z"/>
<circle cx="1402.0" cy="439.8" r="10.2" fill="#ffffff" stroke="#707070" stroke-width="1.6"/>
<path d="M1387.0,439.8H1417.0M1402.5,424.8V454.8" stroke="#ff3838" stroke-opacity="0.75" stroke-width="2.2"/>
</svg>
<rect x="0" y="1032" width="2493" height="1" fill="#8e9096" />
<rect x="0" y="1033" width="2493" height="5" fill="#d9dadc" />
<rect x="0" y="1038" width="2493" height="1" fill="#8e9096" />
<rect x="1237.5" y="1033.5" width="18" height="4" rx="2" fill="#ececee" stroke="#9a9a9a" stroke-width="0.6"/>
<rect x="0" y="1039" width="2493" height="346" fill="#ffffff" />
<text x="457.5" y="1062.2" font-size="13" font-weight="bold" fill="#333" textLength="171.2" lengthAdjust="spacing" text-anchor="start" >Количество событий</text>
<rect x="268" y="1086" width="553" height="1" fill="#b0b0b0" />
<rect x="268" y="1083" width="1" height="3" fill="#b0b0b0" />
<text x="264.7" y="1079.0" font-size="12" fill="#444" textLength="6.6" lengthAdjust="spacing" text-anchor="start" >0</text>
<rect x="318" y="1083" width="1" height="3" fill="#b0b0b0" />
<text x="307.0" y="1079.0" font-size="12" fill="#444" textLength="21.9" lengthAdjust="spacing" text-anchor="start" >500</text>
<rect x="368" y="1083" width="1" height="3" fill="#b0b0b0" />
<text x="351.3" y="1079.0" font-size="12" fill="#444" textLength="33.4" lengthAdjust="spacing" text-anchor="start" >1,000</text>
<rect x="418" y="1083" width="1" height="3" fill="#b0b0b0" />
<text x="401.3" y="1079.0" font-size="12" fill="#444" textLength="33.4" lengthAdjust="spacing" text-anchor="start" >1,500</text>
<rect x="468" y="1083" width="1" height="3" fill="#b0b0b0" />
<text x="451.3" y="1079.0" font-size="12" fill="#444" textLength="33.4" lengthAdjust="spacing" text-anchor="start" >2,000</text>
<rect x="518" y="1083" width="1" height="3" fill="#b0b0b0" />
<text x="501.3" y="1079.0" font-size="12" fill="#444" textLength="33.4" lengthAdjust="spacing" text-anchor="start" >2,500</text>
<rect x="568" y="1083" width="1" height="3" fill="#b0b0b0" />
<text x="551.3" y="1079.0" font-size="12" fill="#444" textLength="33.4" lengthAdjust="spacing" text-anchor="start" >3,000</text>
<rect x="618" y="1083" width="1" height="3" fill="#b0b0b0" />
<text x="601.3" y="1079.0" font-size="12" fill="#444" textLength="33.4" lengthAdjust="spacing" text-anchor="start" >3,500</text>
<rect x="668" y="1083" width="1" height="3" fill="#b0b0b0" />
<text x="651.3" y="1079.0" font-size="12" fill="#444" textLength="33.4" lengthAdjust="spacing" text-anchor="start" >4,000</text>
<rect x="718" y="1083" width="1" height="3" fill="#b0b0b0" />
<text x="701.3" y="1079.0" font-size="12" fill="#444" textLength="33.4" lengthAdjust="spacing" text-anchor="start" >4,500</text>
<rect x="768" y="1083" width="1" height="3" fill="#b0b0b0" />
<text x="751.3" y="1079.0" font-size="12" fill="#444" textLength="33.4" lengthAdjust="spacing" text-anchor="start" >5,000</text>
<rect x="264" y="1090" width="1" height="288" fill="#b8b8b8" />
<rect x="268" y="1090" width="552" height="287" fill="#c0c0c0" />
<line x1="318.5" y1="1091" x2="318.5" y2="1377" stroke="#f0f0f0" stroke-width="1" stroke-dasharray="2,2"/>
<line x1="368.5" y1="1091" x2="368.5" y2="1377" stroke="#f0f0f0" stroke-width="1" stroke-dasharray="2,2"/>
<line x1="418.5" y1="1091" x2="418.5" y2="1377" stroke="#f0f0f0" stroke-width="1" stroke-dasharray="2,2"/>
<line x1="468.5" y1="1091" x2="468.5" y2="1377" stroke="#f0f0f0" stroke-width="1" stroke-dasharray="2,2"/>
<line x1="518.5" y1="1091" x2="518.5" y2="1377" stroke="#f0f0f0" stroke-width="1" stroke-dasharray="2,2"/>
<line x1="568.5" y1="1091" x2="568.5" y2="1377" stroke="#f0f0f0" stroke-width="1" stroke-dasharray="2,2"/>
<line x1="618.5" y1="1091" x2="618.5" y2="1377" stroke="#f0f0f0" stroke-width="1" stroke-dasharray="2,2"/>
<line x1="668.5" y1="1091" x2="668.5" y2="1377" stroke="#f0f0f0" stroke-width="1" stroke-dasharray="2,2"/>
<line x1="718.5" y1="1091" x2="718.5" y2="1377" stroke="#f0f0f0" stroke-width="1" stroke-dasharray="2,2"/>
<line x1="768.5" y1="1091" x2="768.5" y2="1377" stroke="#f0f0f0" stroke-width="1" stroke-dasharray="2,2"/>
<rect x="268" y="1090" width="552" height="1" fill="#404040" />
<rect x="268" y="1090" width="1" height="287" fill="#404040" />
<rect x="819" y="1090" width="1" height="287" fill="#808080" />
<rect x="268" y="1376" width="552" height="1" fill="#808080" />
<rect x="269" y="1104" width="525.0" height="20" fill="url(#gBar)" />
<rect x="269" y="1106" width="525.0" height="2" fill="#ffffff" opacity="0.95"/>
<rect x="269" y="1123" width="525.0" height="1" fill="#ff5a5a" />
<rect x="262" y="1114" width="3" height="1" fill="#b0b0b0" />
<text x="203.7" y="1117.8" font-size="12" fill="#444" textLength="53.8" lengthAdjust="spacing" text-anchor="start" >Germany</text>
<rect x="269" y="1131" width="297.0" height="20" fill="url(#gBar)" />
<rect x="269" y="1133" width="297.0" height="2" fill="#ffffff" opacity="0.95"/>
<rect x="269" y="1150" width="297.0" height="1" fill="#ff5a5a" />
<rect x="262" y="1141" width="3" height="1" fill="#b0b0b0" />
<text x="210.5" y="1144.3" font-size="12" fill="#444" textLength="47.0" lengthAdjust="spacing" text-anchor="start" >Ukraine</text>
<rect x="269" y="1157" width="106.0" height="20" fill="url(#gBar)" />
<rect x="269" y="1159" width="106.0" height="2" fill="#ffffff" opacity="0.95"/>
<rect x="269" y="1176" width="106.0" height="1" fill="#ff5a5a" />
<rect x="262" y="1167" width="3" height="1" fill="#b0b0b0" />
<text x="228.5" y="1170.9" font-size="12" fill="#444" textLength="29.0" lengthAdjust="spacing" text-anchor="start" >India</text>
<rect x="269" y="1184" width="103.5" height="20" fill="url(#gBar)" />
<rect x="269" y="1186" width="103.5" height="2" fill="#ffffff" opacity="0.95"/>
<rect x="269" y="1203" width="103.5" height="1" fill="#ff5a5a" />
<rect x="262" y="1194" width="3" height="1" fill="#b0b0b0" />
<text x="137.6" y="1197.5" font-size="12" fill="#444" textLength="119.9" lengthAdjust="spacing" text-anchor="start" >Russian Federation</text>
<rect x="269" y="1210" width="83.5" height="20" fill="url(#gBar)" />
<rect x="269" y="1212" width="83.5" height="2" fill="#ffffff" opacity="0.95"/>
<rect x="269" y="1229" width="83.5" height="1" fill="#ff5a5a" />
<rect x="262" y="1220" width="3" height="1" fill="#b0b0b0" />
<text x="213.3" y="1224.0" font-size="12" fill="#444" textLength="44.2" lengthAdjust="spacing" text-anchor="start" >Finland</text>
<rect x="269" y="1237" width="77.5" height="20" fill="url(#gBar)" />
<rect x="269" y="1239" width="77.5" height="2" fill="#ffffff" opacity="0.95"/>
<rect x="269" y="1256" width="77.5" height="1" fill="#ff5a5a" />
<rect x="262" y="1247" width="3" height="1" fill="#b0b0b0" />
<text x="181.6" y="1250.5" font-size="12" fill="#444" textLength="75.9" lengthAdjust="spacing" text-anchor="start" >Netherlands</text>
<rect x="269" y="1264" width="69.5" height="20" fill="url(#gBar)" />
<rect x="269" y="1266" width="69.5" height="2" fill="#ffffff" opacity="0.95"/>
<rect x="269" y="1283" width="69.5" height="1" fill="#ff5a5a" />
<rect x="262" y="1274" width="3" height="1" fill="#b0b0b0" />
<text x="139.5" y="1277.1" font-size="12" fill="#444" textLength="118.0" lengthAdjust="spacing" text-anchor="start" >Korea (Republic of)</text>
<rect x="269" y="1290" width="62.5" height="20" fill="url(#gBar)" />
<rect x="269" y="1292" width="62.5" height="2" fill="#ffffff" opacity="0.95"/>
<rect x="269" y="1309" width="62.5" height="1" fill="#ff5a5a" />
<rect x="262" y="1300" width="3" height="1" fill="#b0b0b0" />
<text x="223.5" y="1303.6" font-size="12" fill="#444" textLength="34.0" lengthAdjust="spacing" text-anchor="start" >China</text>
<rect x="269" y="1317" width="32.5" height="20" fill="url(#gBar)" />
<rect x="269" y="1319" width="32.5" height="2" fill="#ffffff" opacity="0.95"/>
<rect x="269" y="1336" width="32.5" height="1" fill="#ff5a5a" />
<rect x="262" y="1327" width="3" height="1" fill="#b0b0b0" />
<text x="102.4" y="1330.2" font-size="12" fill="#444" textLength="155.1" lengthAdjust="spacing" text-anchor="start" >United States of America</text>
<rect x="269" y="1343" width="21.5" height="20" fill="url(#gBar)" />
<rect x="269" y="1345" width="21.5" height="2" fill="#ffffff" opacity="0.95"/>
<rect x="269" y="1362" width="21.5" height="1" fill="#ff5a5a" />
<rect x="262" y="1353" width="3" height="1" fill="#b0b0b0" />
<text x="37.7" y="1356.8" font-size="12" fill="#444" textLength="219.8" lengthAdjust="spacing" text-anchor="start" >United Kingdom of Great Britain a...</text>
<text x="-29.5" y="0" font-size="15" fill="#333" textLength="59" lengthAdjust="spacing" transform="translate(24.8,1233.8) rotate(-90)">Страны</text>
<text x="1253.2" y="1062.2" font-size="13" font-weight="bold" fill="#333" textLength="170.6" lengthAdjust="spacing" text-anchor="start" >Количество событий</text>
<rect x="1028" y="1086" width="623" height="1" fill="#b0b0b0" />
<rect x="1028" y="1083" width="1" height="3" fill="#b0b0b0" />
<text x="1024.7" y="1079.0" font-size="12" fill="#444" textLength="6.6" lengthAdjust="spacing" text-anchor="start" >0</text>
<rect x="1122" y="1083" width="1" height="3" fill="#b0b0b0" />
<text x="1105.5" y="1079.0" font-size="12" fill="#444" textLength="33.4" lengthAdjust="spacing" text-anchor="start" >2,000</text>
<rect x="1216" y="1083" width="1" height="3" fill="#b0b0b0" />
<text x="1199.6" y="1079.0" font-size="12" fill="#444" textLength="33.4" lengthAdjust="spacing" text-anchor="start" >4,000</text>
<rect x="1310" y="1083" width="1" height="3" fill="#b0b0b0" />
<text x="1293.8" y="1079.0" font-size="12" fill="#444" textLength="33.4" lengthAdjust="spacing" text-anchor="start" >6,000</text>
<rect x="1405" y="1083" width="1" height="3" fill="#b0b0b0" />
<text x="1387.9" y="1079.0" font-size="12" fill="#444" textLength="33.4" lengthAdjust="spacing" text-anchor="start" >8,000</text>
<rect x="1499" y="1083" width="1" height="3" fill="#b0b0b0" />
<text x="1478.2" y="1079.0" font-size="12" fill="#444" textLength="41.0" lengthAdjust="spacing" text-anchor="start" >10,000</text>
<rect x="1593" y="1083" width="1" height="3" fill="#b0b0b0" />
<text x="1572.4" y="1079.0" font-size="12" fill="#444" textLength="41.0" lengthAdjust="spacing" text-anchor="start" >12,000</text>
<rect x="1024" y="1090" width="1" height="288" fill="#b8b8b8" />
<rect x="1028" y="1090" width="622" height="287" fill="#c0c0c0" />
<line x1="1122.5" y1="1091" x2="1122.5" y2="1377" stroke="#f0f0f0" stroke-width="1" stroke-dasharray="2,2"/>
<line x1="1216.5" y1="1091" x2="1216.5" y2="1377" stroke="#f0f0f0" stroke-width="1" stroke-dasharray="2,2"/>
<line x1="1310.5" y1="1091" x2="1310.5" y2="1377" stroke="#f0f0f0" stroke-width="1" stroke-dasharray="2,2"/>
<line x1="1405.5" y1="1091" x2="1405.5" y2="1377" stroke="#f0f0f0" stroke-width="1" stroke-dasharray="2,2"/>
<line x1="1499.5" y1="1091" x2="1499.5" y2="1377" stroke="#f0f0f0" stroke-width="1" stroke-dasharray="2,2"/>
<line x1="1593.5" y1="1091" x2="1593.5" y2="1377" stroke="#f0f0f0" stroke-width="1" stroke-dasharray="2,2"/>
<rect x="1028" y="1090" width="622" height="1" fill="#404040" />
<rect x="1028" y="1090" width="1" height="287" fill="#404040" />
<rect x="1649" y="1090" width="1" height="287" fill="#808080" />
<rect x="1028" y="1376" width="622" height="1" fill="#808080" />
<rect x="1029" y="1104" width="591.73275" height="20" fill="url(#gBar)" />
<rect x="1029" y="1106" width="591.73275" height="2" fill="#ffffff" opacity="0.95"/>
<rect x="1029" y="1123" width="591.73275" height="1" fill="#ff5a5a" />
<rect x="1022" y="1114" width="3" height="1" fill="#b0b0b0" />
<text x="868.3" y="1117.8" font-size="12" fill="#444" textLength="148.7" lengthAdjust="spacing" text-anchor="start" >ms-wbt-server-TCP:3389</text>
<rect x="1029" y="1131" width="28.009625" height="20" fill="url(#gBar)" />
<rect x="1029" y="1133" width="28.009625" height="2" fill="#ffffff" opacity="0.95"/>
<rect x="1029" y="1150" width="28.009625" height="1" fill="#ff5a5a" />
<rect x="1022" y="1141" width="3" height="1" fill="#b0b0b0" />
<text x="934.7" y="1144.3" font-size="12" fill="#444" textLength="82.3" lengthAdjust="spacing" text-anchor="start" >sip-UDP:5060</text>
<rect x="1029" y="1157" width="14.828624999999999" height="20" fill="url(#gBar)" />
<rect x="1029" y="1159" width="14.828624999999999" height="2" fill="#ffffff" opacity="0.95"/>
<rect x="1029" y="1176" width="14.828624999999999" height="1" fill="#ff5a5a" />
<rect x="1022" y="1167" width="3" height="1" fill="#b0b0b0" />
<text x="904.6" y="1170.9" font-size="12" fill="#444" textLength="112.4" lengthAdjust="spacing" text-anchor="start" >ms-sql-s-TCP:1433</text>
<rect x="1029" y="1184" width="1.883" height="20" fill="url(#gBar)" />
<rect x="1029" y="1186" width="1.883" height="2" fill="#ffffff" opacity="0.95"/>
<rect x="1029" y="1203" width="1.883" height="1" fill="#ff5a5a" />
<rect x="1022" y="1194" width="3" height="1" fill="#b0b0b0" />
<text x="920.6" y="1197.5" font-size="12" fill="#444" textLength="96.4" lengthAdjust="spacing" text-anchor="start" >cwmp-TCP:7547</text>
<rect x="1029" y="1210" width="1.176875" height="20" fill="url(#gBar)" />
<rect x="1029" y="1212" width="1.176875" height="2" fill="#ffffff" opacity="0.95"/>
<rect x="1029" y="1229" width="1.176875" height="1" fill="#ff5a5a" />
<rect x="1022" y="1220" width="3" height="1" fill="#b0b0b0" />
<text x="875.7" y="1224.0" font-size="12" fill="#444" textLength="141.3" lengthAdjust="spacing" text-anchor="start" >pcsync-https-TCP:8443</text>
<rect x="1029" y="1237" width="1" height="20" fill="url(#gBar)" />
<rect x="1029" y="1239" width="1" height="2" fill="#ffffff" opacity="0.95"/>
<rect x="1029" y="1256" width="1" height="1" fill="#ff5a5a" />
<rect x="1022" y="1247" width="3" height="1" fill="#b0b0b0" />
<text x="951.1" y="1250.5" font-size="12" fill="#444" textLength="65.9" lengthAdjust="spacing" text-anchor="start" >TCP:36957</text>
<rect x="1029" y="1264" width="1" height="20" fill="url(#gBar)" />
<rect x="1029" y="1266" width="1" height="2" fill="#ffffff" opacity="0.95"/>
<rect x="1029" y="1283" width="1" height="1" fill="#ff5a5a" />
<rect x="1022" y="1274" width="3" height="1" fill="#b0b0b0" />
<text x="983.2" y="1277.1" font-size="12" fill="#444" textLength="33.8" lengthAdjust="spacing" text-anchor="start" >TCP:0</text>
<rect x="1029" y="1290" width="1" height="20" fill="url(#gBar)" />
<rect x="1029" y="1292" width="1" height="2" fill="#ffffff" opacity="0.95"/>
<rect x="1029" y="1309" width="1" height="1" fill="#ff5a5a" />
<rect x="1022" y="1300" width="3" height="1" fill="#b0b0b0" />
<text x="898.0" y="1303.6" font-size="12" fill="#444" textLength="119.0" lengthAdjust="spacing" text-anchor="start" >ncube-lm-TCP:1521</text>
<rect x="1029" y="1317" width="1" height="20" fill="url(#gBar)" />
<rect x="1029" y="1319" width="1" height="2" fill="#ffffff" opacity="0.95"/>
<rect x="1029" y="1336" width="1" height="1" fill="#ff5a5a" />
<rect x="1022" y="1327" width="3" height="1" fill="#b0b0b0" />
<text x="888.4" y="1330.2" font-size="12" fill="#444" textLength="128.6" lengthAdjust="spacing" text-anchor="start" >postgresql-TCP:5432</text>
<rect x="1029" y="1343" width="1" height="20" fill="url(#gBar)" />
<rect x="1029" y="1345" width="1" height="2" fill="#ffffff" opacity="0.95"/>
<rect x="1029" y="1362" width="1" height="1" fill="#ff5a5a" />
<rect x="1022" y="1353" width="3" height="1" fill="#b0b0b0" />
<text x="920.5" y="1356.8" font-size="12" fill="#444" textLength="96.5" lengthAdjust="spacing" text-anchor="start" >mysql-TCP:3306</text>
<text x="-25.0" y="0" font-size="15" fill="#333" textLength="50" lengthAdjust="spacing" transform="translate(856.8,1233.8) rotate(-90)">Порты</text>
<text x="2126.8" y="1062.2" font-size="13" font-weight="bold" fill="#333" textLength="170.8" lengthAdjust="spacing" text-anchor="start" >Количество событий</text>
<rect x="1945" y="1086" width="538" height="1" fill="#b0b0b0" />
<rect x="1945" y="1083" width="1" height="3" fill="#b0b0b0" />
<text x="1941.7" y="1079.0" font-size="12" fill="#444" textLength="6.6" lengthAdjust="spacing" text-anchor="start" >0</text>
<rect x="2032" y="1083" width="1" height="3" fill="#b0b0b0" />
<text x="2014.9" y="1079.0" font-size="12" fill="#444" textLength="33.4" lengthAdjust="spacing" text-anchor="start" >1,000</text>
<rect x="2118" y="1083" width="1" height="3" fill="#b0b0b0" />
<text x="2101.4" y="1079.0" font-size="12" fill="#444" textLength="33.4" lengthAdjust="spacing" text-anchor="start" >2,000</text>
<rect x="2205" y="1083" width="1" height="3" fill="#b0b0b0" />
<text x="2188.0" y="1079.0" font-size="12" fill="#444" textLength="33.4" lengthAdjust="spacing" text-anchor="start" >3,000</text>
<rect x="2291" y="1083" width="1" height="3" fill="#b0b0b0" />
<text x="2274.5" y="1079.0" font-size="12" fill="#444" textLength="33.4" lengthAdjust="spacing" text-anchor="start" >4,000</text>
<rect x="2378" y="1083" width="1" height="3" fill="#b0b0b0" />
<text x="2361.1" y="1079.0" font-size="12" fill="#444" textLength="33.4" lengthAdjust="spacing" text-anchor="start" >5,000</text>
<rect x="2464" y="1083" width="1" height="3" fill="#b0b0b0" />
<text x="2447.6" y="1079.0" font-size="12" fill="#444" textLength="33.4" lengthAdjust="spacing" text-anchor="start" >6,000</text>
<rect x="1941" y="1090" width="1" height="288" fill="#b8b8b8" />
<rect x="1945" y="1090" width="537" height="287" fill="#c0c0c0" />
<line x1="2032.5" y1="1091" x2="2032.5" y2="1377" stroke="#f0f0f0" stroke-width="1" stroke-dasharray="2,2"/>
<line x1="2118.5" y1="1091" x2="2118.5" y2="1377" stroke="#f0f0f0" stroke-width="1" stroke-dasharray="2,2"/>
<line x1="2205.5" y1="1091" x2="2205.5" y2="1377" stroke="#f0f0f0" stroke-width="1" stroke-dasharray="2,2"/>
<line x1="2291.5" y1="1091" x2="2291.5" y2="1377" stroke="#f0f0f0" stroke-width="1" stroke-dasharray="2,2"/>
<line x1="2378.5" y1="1091" x2="2378.5" y2="1377" stroke="#f0f0f0" stroke-width="1" stroke-dasharray="2,2"/>
<line x1="2464.5" y1="1091" x2="2464.5" y2="1377" stroke="#f0f0f0" stroke-width="1" stroke-dasharray="2,2"/>
<rect x="1945" y="1090" width="537" height="1" fill="#404040" />
<rect x="1945" y="1090" width="1" height="287" fill="#404040" />
<rect x="2481" y="1090" width="1" height="287" fill="#808080" />
<rect x="1945" y="1376" width="537" height="1" fill="#808080" />
<rect x="1946" y="1104" width="510.64500000000004" height="20" fill="url(#gBar)" />
<rect x="1946" y="1106" width="510.64500000000004" height="2" fill="#ffffff" opacity="0.95"/>
<rect x="1946" y="1123" width="510.64500000000004" height="1" fill="#ff5a5a" />
<rect x="1939" y="1114" width="3" height="1" fill="#b0b0b0" />
<text x="1857.0" y="1117.8" font-size="12" fill="#444" textLength="77.1" lengthAdjust="spacing" text-anchor="start" >HETZNER-AS</text>
<rect x="1946" y="1131" width="208.5855" height="20" fill="url(#gBar)" />
<rect x="1946" y="1133" width="208.5855" height="2" fill="#ffffff" opacity="0.95"/>
<rect x="1946" y="1150" width="208.5855" height="1" fill="#ff5a5a" />
<rect x="1939" y="1141" width="3" height="1" fill="#b0b0b0" />
<text x="1834.3" y="1144.3" font-size="12" fill="#444" textLength="99.8" lengthAdjust="spacing" text-anchor="start" >Не определено</text>
<rect x="1946" y="1157" width="108.62025" height="20" fill="url(#gBar)" />
<rect x="1946" y="1159" width="108.62025" height="2" fill="#ffffff" opacity="0.95"/>
<rect x="1946" y="1176" width="108.62025" height="1" fill="#ff5a5a" />
<rect x="1939" y="1167" width="3" height="1" fill="#b0b0b0" />
<text x="1852.9" y="1170.9" font-size="12" fill="#444" textLength="81.2" lengthAdjust="spacing" text-anchor="start" >RMINJINERING</text>
<rect x="1946" y="1184" width="45.8715" height="20" fill="url(#gBar)" />
<rect x="1946" y="1186" width="45.8715" height="2" fill="#ffffff" opacity="0.95"/>
<rect x="1946" y="1203" width="45.8715" height="1" fill="#ff5a5a" />
<rect x="1939" y="1194" width="3" height="1" fill="#b0b0b0" />
<text x="1885.7" y="1197.5" font-size="12" fill="#444" textLength="48.4" lengthAdjust="spacing" text-anchor="start" >Selectel</text>
<rect x="1946" y="1210" width="38.9475" height="20" fill="url(#gBar)" />
<rect x="1946" y="1212" width="38.9475" height="2" fill="#ffffff" opacity="0.95"/>
<rect x="1946" y="1229" width="38.9475" height="1" fill="#ff5a5a" />
<rect x="1939" y="1220" width="3" height="1" fill="#b0b0b0" />
<text x="1804.5" y="1224.0" font-size="12" fill="#444" textLength="129.6" lengthAdjust="spacing" text-anchor="start" >SK Broadband Co Ltd</text>
<rect x="1946" y="1237" width="31.158" height="20" fill="url(#gBar)" />
<rect x="1946" y="1239" width="31.158" height="2" fill="#ffffff" opacity="0.95"/>
<rect x="1946" y="1256" width="31.158" height="1" fill="#ff5a5a" />
<rect x="1939" y="1247" width="3" height="1" fill="#b0b0b0" />
<text x="1846.1" y="1250.5" font-size="12" fill="#444" textLength="88.0" lengthAdjust="spacing" text-anchor="start" >THERECOMLTD</text>
<rect x="1946" y="1264" width="27.26325" height="20" fill="url(#gBar)" />
<rect x="1946" y="1266" width="27.26325" height="2" fill="#ffffff" opacity="0.95"/>
<rect x="1946" y="1283" width="27.26325" height="1" fill="#ff5a5a" />
<rect x="1939" y="1274" width="3" height="1" fill="#b0b0b0" />
<text x="1855.3" y="1277.1" font-size="12" fill="#444" textLength="78.8" lengthAdjust="spacing" text-anchor="start" >NPF LINK Ltd.</text>
<rect x="1946" y="1290" width="22.93575" height="20" fill="url(#gBar)" />
<rect x="1946" y="1292" width="22.93575" height="2" fill="#ffffff" opacity="0.95"/>
<rect x="1946" y="1309" width="22.93575" height="1" fill="#ff5a5a" />
<rect x="1939" y="1300" width="3" height="1" fill="#b0b0b0" />
<text x="1699.0" y="1303.6" font-size="12" fill="#444" textLength="235.1" lengthAdjust="spacing" text-anchor="start" >Kyivski Telekomunikatsiyni Merezhi LLC</text>
<rect x="1946" y="1317" width="21.20475" height="20" fill="url(#gBar)" />
<rect x="1946" y="1319" width="21.20475" height="2" fill="#ffffff" opacity="0.95"/>
<rect x="1946" y="1336" width="21.20475" height="1" fill="#ff5a5a" />
<rect x="1939" y="1327" width="3" height="1" fill="#b0b0b0" />
<text x="1702.4" y="1330.2" font-size="12" fill="#444" textLength="231.7" lengthAdjust="spacing" text-anchor="start" >Guangdong Mobile Communication ...</text>
<rect x="1946" y="1343" width="21.20475" height="20" fill="url(#gBar)" />
<rect x="1946" y="1345" width="21.20475" height="2" fill="#ffffff" opacity="0.95"/>
<rect x="1946" y="1362" width="21.20475" height="1" fill="#ff5a5a" />
<rect x="1939" y="1353" width="3" height="1" fill="#b0b0b0" />
<text x="1842.8" y="1356.8" font-size="12" fill="#444" textLength="91.3" lengthAdjust="spacing" text-anchor="start" >Korea Telecom</text>
<text x="-45.3" y="0" font-size="15" fill="#333" textLength="90.6" lengthAdjust="spacing" transform="translate(1686.8,1233.8) rotate(-90)">Владельцы</text></svg>
</body></html>
